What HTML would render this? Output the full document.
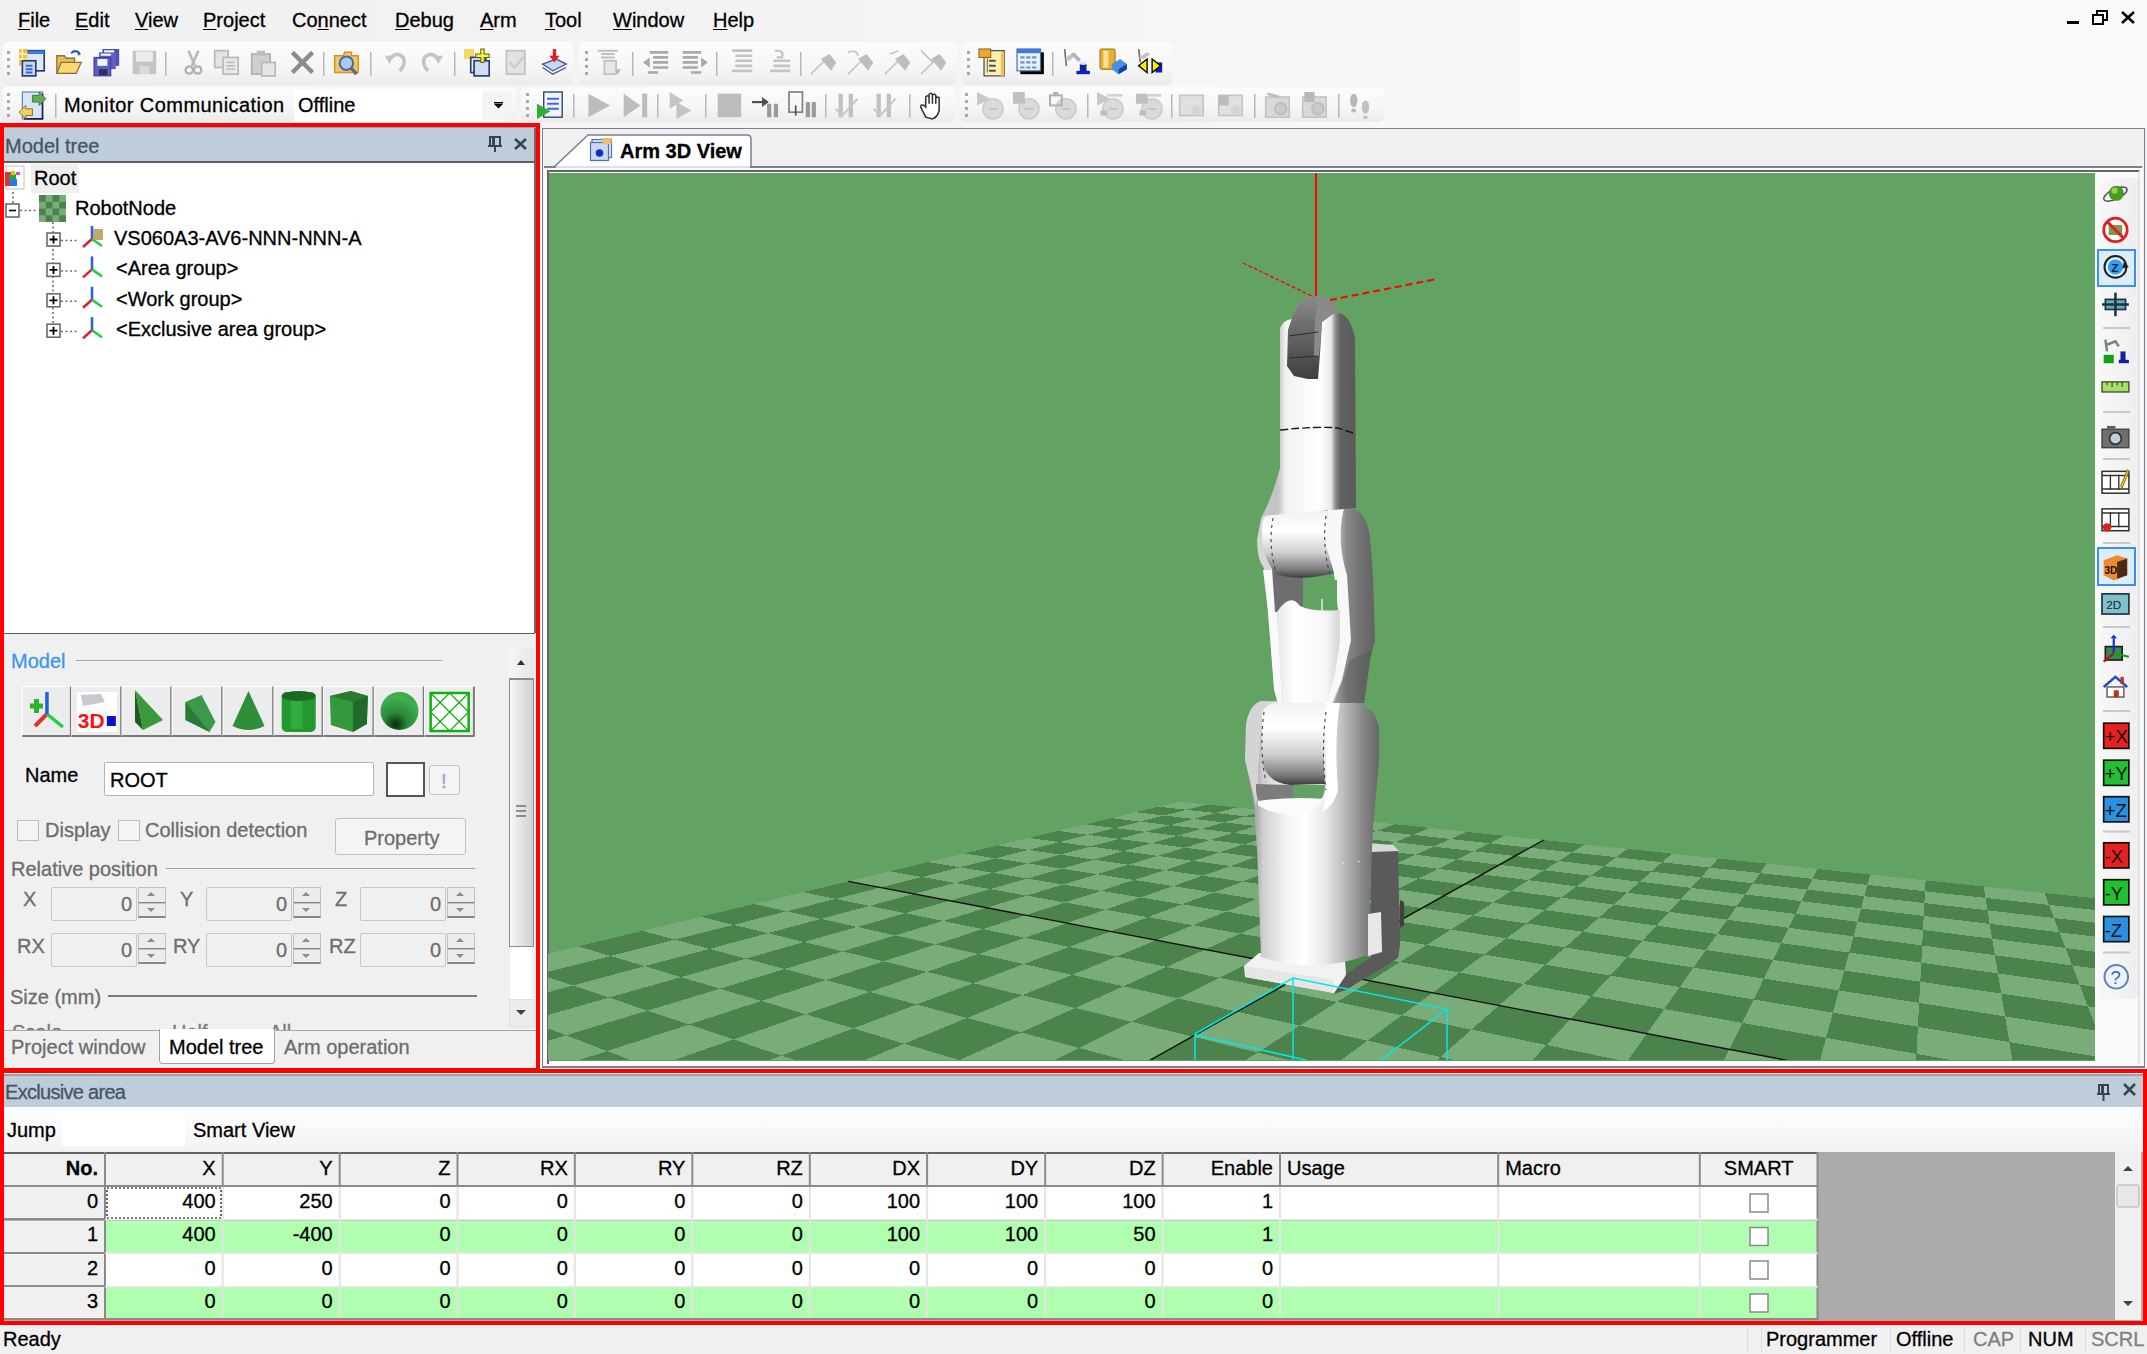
<!DOCTYPE html><html><head><meta charset="utf-8"><style>
html,body{margin:0;padding:0;}
body{width:2147px;height:1354px;overflow:hidden;position:relative;background:#f0f0f0;font-family:"Liberation Sans",sans-serif;}
.t{position:absolute;white-space:nowrap;line-height:1;-webkit-text-stroke:0.3px currentColor;}
div{box-sizing:border-box;}
svg{position:absolute;overflow:visible;}
u{text-decoration-thickness:1px;text-underline-offset:2px}
</style></head><body>
<div style="position:absolute;left:0px;top:0px;width:2147px;height:41px;background:linear-gradient(90deg,#f0f0f0,#f3f3f3 40%,#f8f8f8 65%,#fafafa)"></div>
<div class="t" style="left:18px;top:9.9px;font-size:20px;color:#000;font-weight:normal;"><u>F</u>ile</div>
<div class="t" style="left:75px;top:9.9px;font-size:20px;color:#000;font-weight:normal;"><u>E</u>dit</div>
<div class="t" style="left:135px;top:9.9px;font-size:20px;color:#000;font-weight:normal;"><u>V</u>iew</div>
<div class="t" style="left:203px;top:9.9px;font-size:20px;color:#000;font-weight:normal;"><u>P</u>roject</div>
<div class="t" style="left:292px;top:9.9px;font-size:20px;color:#000;font-weight:normal;">Co<u>n</u>nect</div>
<div class="t" style="left:395px;top:9.9px;font-size:20px;color:#000;font-weight:normal;"><u>D</u>ebug</div>
<div class="t" style="left:480px;top:9.9px;font-size:20px;color:#000;font-weight:normal;"><u>A</u>rm</div>
<div class="t" style="left:545px;top:9.9px;font-size:20px;color:#000;font-weight:normal;"><u>T</u>ool</div>
<div class="t" style="left:613px;top:9.9px;font-size:20px;color:#000;font-weight:normal;"><u>W</u>indow</div>
<div class="t" style="left:713px;top:9.9px;font-size:20px;color:#000;font-weight:normal;"><u>H</u>elp</div>
<svg style="left:0;top:0" width="2147" height="41"><rect x="2067" y="21" width="12" height="3" fill="#000"/><rect x="2097" y="11" width="10" height="9" fill="none" stroke="#000" stroke-width="2"/><rect x="2093" y="15" width="10" height="9" fill="#fafafa" stroke="#000" stroke-width="2"/><path d="M2122 12 L2134 23 M2134 12 L2122 23" stroke="#000" stroke-width="2.5"/></svg>
<div style="position:absolute;left:0px;top:41px;width:2147px;height:87px;background:linear-gradient(90deg,#f1f1f1,#f4f4f4 40%,#f8f8f8 65%,#fafafa)"></div>
<div style="position:absolute;left:3px;top:42px;width:570px;height:43px;background:linear-gradient(#fcfcfc,#f6f6f6 60%,#ebebeb);border-radius:5px"></div>
<div style="position:absolute;left:579px;top:42px;width:378px;height:43px;background:linear-gradient(#fcfcfc,#f6f6f6 60%,#ebebeb);border-radius:5px"></div>
<div style="position:absolute;left:962px;top:42px;width:210px;height:43px;background:linear-gradient(#fcfcfc,#f6f6f6 60%,#ebebeb);border-radius:5px"></div>
<div style="position:absolute;left:3px;top:87px;width:513px;height:35px;background:linear-gradient(#fcfcfc,#f6f6f6 60%,#ebebeb);border-radius:5px"></div>
<div style="position:absolute;left:521px;top:87px;width:434px;height:35px;background:linear-gradient(#fcfcfc,#f6f6f6 60%,#ebebeb);border-radius:5px"></div>
<div style="position:absolute;left:960px;top:87px;width:424px;height:35px;background:linear-gradient(#fcfcfc,#f6f6f6 60%,#ebebeb);border-radius:5px"></div>
<svg style="left:0;top:0" width="2147" height="130"><rect x="7" y="51" width="3" height="3" fill="#a8a8a8"/><rect x="7" y="58" width="3" height="3" fill="#a8a8a8"/><rect x="7" y="65" width="3" height="3" fill="#a8a8a8"/><rect x="7" y="72" width="3" height="3" fill="#a8a8a8"/><rect x="585" y="51" width="3" height="3" fill="#a8a8a8"/><rect x="585" y="58" width="3" height="3" fill="#a8a8a8"/><rect x="585" y="65" width="3" height="3" fill="#a8a8a8"/><rect x="585" y="72" width="3" height="3" fill="#a8a8a8"/><rect x="967" y="51" width="3" height="3" fill="#a8a8a8"/><rect x="967" y="58" width="3" height="3" fill="#a8a8a8"/><rect x="967" y="65" width="3" height="3" fill="#a8a8a8"/><rect x="967" y="72" width="3" height="3" fill="#a8a8a8"/><rect x="7" y="93" width="3" height="3" fill="#a8a8a8"/><rect x="7" y="100" width="3" height="3" fill="#a8a8a8"/><rect x="7" y="107" width="3" height="3" fill="#a8a8a8"/><rect x="7" y="114" width="3" height="3" fill="#a8a8a8"/><rect x="526" y="93" width="3" height="3" fill="#a8a8a8"/><rect x="526" y="100" width="3" height="3" fill="#a8a8a8"/><rect x="526" y="107" width="3" height="3" fill="#a8a8a8"/><rect x="526" y="114" width="3" height="3" fill="#a8a8a8"/><rect x="965" y="93" width="3" height="3" fill="#a8a8a8"/><rect x="965" y="100" width="3" height="3" fill="#a8a8a8"/><rect x="965" y="107" width="3" height="3" fill="#a8a8a8"/><rect x="965" y="114" width="3" height="3" fill="#a8a8a8"/><g transform="translate(19,49) scale(1.68)"><rect x="4" y="1" width="11" height="12" fill="#dfe8f7" stroke="#2a3f6a" stroke-width="1"/><rect x="4" y="1" width="11" height="2" fill="#3d7ae0"/><rect x="0" y="0" width="5" height="10" fill="#f2c23a"/><path d="M0 3h5M0 6h5M2 0v10" stroke="#fff6c0" stroke-width="0.8"/><rect x="2" y="7" width="8" height="9" fill="#c8d8f0" stroke="#2a3f6a" stroke-width="1"/><path d="M4 10h4M4 12h4M4 14h4" stroke="#3a6ad0" stroke-width="1.2"/></g><g transform="translate(56,49) scale(1.68)"><path d="M0.5 4 L5 4 L6 5.5 L11 5.5 L11 14.5 L0.5 14.5 Z" fill="#e8c050" stroke="#8a7040" stroke-width="0.8"/><path d="M3 8 L15 8 L12 14.5 L0.5 14.5 Z" fill="#f8d870" stroke="#8a7040" stroke-width="0.8"/><path d="M9 2.5 Q11.5 0 14 2.5" stroke="#3a5a9a" stroke-width="1.2" fill="none"/><path d="M13 1.5 L15 3 L13 4 Z" fill="#3a5a9a"/></g><g transform="translate(94,49) scale(1.68)"><rect x="5" y="0" width="10" height="10" fill="#5050b0"/><rect x="3" y="2" width="10" height="10" fill="#6060c0"/><rect x="0" y="5" width="10" height="11" fill="#5a5ac8" stroke="#3a3a90" stroke-width="0.6"/><rect x="2" y="6" width="6" height="4" fill="#f4f4ff"/><rect x="3" y="12" width="5" height="3.5" fill="#303050"/><rect x="6" y="0.8" width="6" height="1.2" fill="#fff"/><rect x="4" y="2.8" width="6" height="1.2" fill="#fff"/></g><g transform="translate(131,49) scale(1.68)"><rect x="1" y="1" width="14" height="14" fill="#c4c4c4"/><rect x="3" y="1.5" width="10" height="6" fill="#ececec"/><rect x="5" y="10" width="6" height="5" fill="#dadada"/></g><g transform="translate(180,49) scale(1.68)"><path d="M5 1 L9 10 M11 1 L7 10" stroke="#b8b8b8" stroke-width="1.5"/><circle cx="5.5" cy="12.5" r="2.2" fill="none" stroke="#b0b0b0" stroke-width="1.4"/><circle cx="10.5" cy="12.5" r="2.2" fill="none" stroke="#b0b0b0" stroke-width="1.4"/></g><g transform="translate(213,49) scale(1.68)"><rect x="1" y="1" width="8" height="10" fill="#e4e4e4" stroke="#b8b8b8"/><rect x="6" y="5" width="9" height="10" fill="#e8e8e8" stroke="#b8b8b8"/><path d="M8 8h5M8 10h5M8 12h5" stroke="#c0c0c0"/></g><g transform="translate(250,49) scale(1.68)"><rect x="1" y="3" width="11" height="12" fill="#cfcfcf" stroke="#b0b0b0"/><rect x="4" y="1" width="5" height="3" fill="#bdbdbd"/><rect x="7" y="8" width="8" height="8" fill="#e6e6e6" stroke="#b8b8b8"/></g><g transform="translate(289,49) scale(1.68)"><path d="M2 2 L14 14 M14 2 L2 14" stroke="#8c8c8c" stroke-width="2.6"/></g><g transform="translate(333,49) scale(1.68)"><path d="M1 4 L6 4 L7 2 L11 2 L11 4 L15 4 L15 14 L1 14 Z" fill="#f0c868" stroke="#d89020" stroke-width="0.9"/><circle cx="8" cy="8.5" r="4" fill="#a8c8f0" stroke="#4a6aa0" stroke-width="1.2"/><path d="M11 11.5 L14 15" stroke="#5a6a8a" stroke-width="2"/></g><g transform="translate(383,49) scale(1.68)"><path d="M4 6 Q8 1 12 5 Q14 9 10 13" stroke="#c4c4c4" stroke-width="2.2" fill="none"/><path d="M1 4 L6 4 L4 9 Z" fill="#c4c4c4"/></g><g transform="translate(418,49) scale(1.68)"><path d="M12 6 Q8 1 4 5 Q2 9 6 13" stroke="#c4c4c4" stroke-width="2.2" fill="none"/><path d="M15 4 L10 4 L12 9 Z" fill="#c4c4c4"/></g><g transform="translate(464,49) scale(1.68)"><rect x="0" y="0" width="6" height="6" fill="#f4d860"/><rect x="4" y="5" width="9" height="9" fill="#e8eef8" stroke="#2a3f6a"/><rect x="6" y="7" width="9" height="9" fill="#d0dcf0" stroke="#2a3f6a"/><path d="M10 0 L12 0 L12 3 L15 3 L15 5 L12 5 L12 8 L10 8 L10 5 L7 5 L7 3 L10 3 Z" fill="#f8f040" stroke="#606010" stroke-width="0.6"/></g><g transform="translate(503,49) scale(1.68)"><rect x="2" y="1" width="11" height="14" fill="#e2e2e2" stroke="#c0c0c0"/><path d="M4 8 L7 11 L12 5" stroke="#c8c8c8" stroke-width="1.3" fill="none"/></g><g transform="translate(541,49) scale(1.68)"><path d="M1 9 L9 6 L15 9 L7 13 Z" fill="#c8d8f0" stroke="#4a5a8a" stroke-width="0.8"/><path d="M1 11 L7 15 L15 11" stroke="#4a5a8a" stroke-width="0.8" fill="none"/><rect x="7" y="0" width="2" height="5" fill="#e02020"/><path d="M5 4 L11 4 L8 8 Z" fill="#e02020"/></g><g transform="translate(596,49) scale(1.68)"><path d="M1 1h12M3 3h8M3 5h8" stroke="#c0c0c0" stroke-width="1.2"/><rect x="5" y="7" width="7" height="8" fill="#e6e6e6" stroke="#c0c0c0"/><path d="M11 12 L15 12 L13 15 Z" fill="#b8b8b8"/></g><g transform="translate(643,49) scale(1.68)"><path d="M4 2h11M6 5h9M6 8h9M6 11h9M3 14h6" stroke="#a8a8a8" stroke-width="1.6"/><path d="M0 8 L4 5 L4 11 Z" fill="#a8a8a8"/></g><g transform="translate(681,49) scale(1.68)"><path d="M1 2h11M1 5h9M1 8h9M1 11h9M6 14h6" stroke="#a8a8a8" stroke-width="1.6"/><path d="M16 8 L12 5 L12 11 Z" fill="#a8a8a8"/></g><g transform="translate(727,49) scale(1.68)"><path d="M3 1h12M5 4h10M5 7h10M5 10h10M3 13h12" stroke="#c4c4c4" stroke-width="1.6"/></g><g transform="translate(765,49) scale(1.68)"><path d="M3 13h12M5 10h10M5 7h10" stroke="#c4c4c4" stroke-width="1.6"/><path d="M6 1 Q12 1 10 5 L7 5" stroke="#c4c4c4" stroke-width="1.4" fill="none"/></g><g transform="translate(811,49) scale(1.68)"><path d="M0 15 L8 7" stroke="#c4c4c4" stroke-width="1"/><path d="M6 6 L11 3 L15 8 L12 13 Z" fill="#bdbdbd"/></g><g transform="translate(848,49) scale(1.68)"><path d="M0 15 L8 7" stroke="#c4c4c4" stroke-width="1"/><path d="M6 6 L11 3 L15 8 L12 13 Z" fill="#bdbdbd"/><path d="M0 2 Q5 0 6 4" stroke="#c4c4c4" fill="none"/></g><g transform="translate(885,49) scale(1.68)"><path d="M0 15 L8 7" stroke="#c4c4c4" stroke-width="1"/><path d="M6 6 L11 3 L15 8 L12 13 Z" fill="#bdbdbd"/><path d="M3 3 L8 1" stroke="#c4c4c4"/></g><g transform="translate(921,49) scale(1.68)"><path d="M0 15 L8 7" stroke="#c4c4c4" stroke-width="1"/><path d="M6 6 L11 3 L15 8 L12 13 Z" fill="#bdbdbd"/><path d="M0 1 L7 8" stroke="#c4c4c4"/></g><g transform="translate(979,49) scale(1.68)"><rect x="3" y="1" width="12" height="15" fill="#fff0b0" stroke="#404040" stroke-width="0.7"/><rect x="13" y="2" width="2" height="14" fill="#f0c060"/><rect x="0" y="0" width="7" height="5" fill="#f0a830" stroke="#806020" stroke-width="0.6"/><path d="M6 7h4M6 10h4M6 13h4" stroke="#505050" stroke-width="1.2"/><path d="M5 5v9" stroke="#808080" stroke-width="0.8"/></g><g transform="translate(1017,49) scale(1.68)"><rect x="2" y="2" width="14" height="13" fill="#000"/><rect x="0" y="0" width="14" height="13" fill="#e8f0fc" stroke="#5070a8" stroke-width="0.7"/><rect x="0" y="0" width="14" height="2.5" fill="#3c78e0"/><path d="M2 5h10M2 8h10M2 11h10" stroke="#7090c8" stroke-width="1.3" stroke-dasharray="2.5 1"/></g><g transform="translate(1063,49) scale(1.68)"><path d="M1 0 L2 10" stroke="#707070" stroke-width="1"/><path d="M1 6 L6 2 L8 3 L4 7 Z" fill="#c0c0c8"/><path d="M6 3 L10 7" stroke="#b0b0c0" stroke-width="2"/><rect x="10" y="9" width="4" height="5" fill="#1020a0"/><rect x="8" y="13" width="8" height="2" fill="#1020c0"/><ellipse cx="12" cy="8.5" rx="2" ry="1" fill="#e0e0f0"/></g><g transform="translate(1100,49) scale(1.68)"><rect x="0" y="0" width="9" height="12" rx="1" fill="#e8b030" stroke="#a07020" stroke-width="0.6"/><rect x="2" y="1" width="3" height="10" fill="#f8e098"/><path d="M7 9 L12 6 L16 9 L16 12 L11 15 L7 12 Z" fill="#4a90e0"/><path d="M11 15 L16 12 L16 9 L11 12 Z" fill="#1040b0"/></g><g transform="translate(1137,49) scale(1.68)"><path d="M1 0 L2 8" stroke="#707070"/><path d="M1 5 L6 2 L8 3 L4 6 Z" fill="#c0c0c8"/><rect x="11" y="8" width="4" height="6" fill="#1020a0"/><path d="M6 6 L1 10 L6 14 Z" fill="#f8f000" stroke="#000" stroke-width="0.8"/><path d="M9 6 L14 10 L9 14 Z" fill="#f8f000" stroke="#000" stroke-width="0.8"/></g><rect x="165" y="52" width="1.5" height="24" fill="#b8b8b8"/><rect x="323" y="52" width="1.5" height="24" fill="#b8b8b8"/><rect x="370" y="52" width="1.5" height="24" fill="#b8b8b8"/><rect x="454" y="52" width="1.5" height="24" fill="#b8b8b8"/><rect x="632" y="52" width="1.5" height="24" fill="#b8b8b8"/><rect x="716" y="52" width="1.5" height="24" fill="#b8b8b8"/><rect x="800" y="52" width="1.5" height="24" fill="#b8b8b8"/><rect x="1052" y="52" width="1.5" height="24" fill="#b8b8b8"/><g transform="translate(19,92) scale(1.68)"><rect x="2" y="0" width="12" height="16" fill="#d8e4f8" stroke="#6080c0" stroke-width="0.7"/><path d="M14 1 L14 16 L3 16" stroke="#202050" stroke-width="1" fill="none"/><path d="M8 2 L12 2 L12 0 L16 4 L12 8 L12 6 L8 6 Z" fill="#60b050" stroke="#307030" stroke-width="0.5"/><path d="M8 10 L4 10 L4 8 L0 12 L4 16 L4 14 L8 14 Z" fill="#f0d060" stroke="#806020" stroke-width="0.5"/></g><g transform="translate(537,92) scale(1.68)"><rect x="4" y="0" width="11" height="15" fill="#f0f4fc" stroke="#2a3f6a" stroke-width="0.8"/><path d="M6 4h7M6 7h7M6 10h7" stroke="#3a6ad0" stroke-width="1.2"/><path d="M0 7 L8 11.5 L0 16 Z" fill="#30b030"/></g><g transform="translate(585,92) scale(1.68)"><path d="M2 1 L15 8 L2 15 Z" fill="#bcbcbc"/></g><g transform="translate(622,92) scale(1.68)"><path d="M1 1 L11 8 L1 15 Z" fill="#bcbcbc"/><rect x="12" y="1" width="3" height="14" fill="#bcbcbc"/></g><g transform="translate(668,92) scale(1.68)"><path d="M1 0 L9 5 L1 10 Z" fill="#c4c4c4"/><path d="M5 6 L14 11 L5 16 Z" fill="#c4c4c4"/></g><g transform="translate(716,92) scale(1.68)"><rect x="1" y="1" width="14" height="14" fill="#bcbcbc"/></g><g transform="translate(752,92) scale(1.68)"><path d="M0 6h9" stroke="#505050" stroke-width="1.3"/><path d="M6 3 L10 6 L6 9 Z" fill="#505050"/><rect x="9" y="7" width="2.5" height="8" fill="#9a9a9a"/><rect x="13" y="7" width="2.5" height="8" fill="#9a9a9a"/></g><g transform="translate(789,92) scale(1.68)"><rect x="0" y="0" width="8" height="12" fill="none" stroke="#808080" stroke-width="1"/><path d="M4 8v6" stroke="#505050"/><rect x="10" y="6" width="2.5" height="9" fill="#9a9a9a"/><rect x="13.5" y="6" width="2.5" height="9" fill="#9a9a9a"/></g><g transform="translate(834,92) scale(1.68)"><path d="M4 1v14M10 1v14" stroke="#c0c0c0" stroke-width="2.5"/><path d="M1 10 L5 14 L14 4" stroke="#c8c8c8" stroke-width="1.2" fill="none"/></g><g transform="translate(872,92) scale(1.68)"><path d="M4 1v14M10 1v14" stroke="#c0c0c0" stroke-width="2.5"/><path d="M1 10 L5 14 L14 4" stroke="#c8c8c8" stroke-width="1.2" fill="none"/></g><g transform="translate(919,92) scale(1.68)"><path d="M4 15 L1 9 Q1 7 3 8 L4 9 L4 3 Q5 1.5 6 3 L6 7 L6 1.5 Q7 0 8 1.5 L8 7 L8 2 Q9 0.8 10 2 L10 7 L10 3.5 Q11 2.5 12 3.5 L12 11 Q11 15 8 16 Z" fill="#fff" stroke="#303030" stroke-width="0.9"/></g><g transform="translate(977,92) scale(1.68)"><circle cx="9.5" cy="10" r="6" fill="#dadada" stroke="#cdcdcd"/><path d="M7 10h5" stroke="#c0c0c0"/><path d="M0 0 L8 4 L0 8 Z" fill="#c8c8c8"/></g><g transform="translate(1013,92) scale(1.68)"><circle cx="9.5" cy="10" r="6" fill="#dadada" stroke="#cdcdcd"/><path d="M7 10h5" stroke="#c0c0c0"/><rect x="0" y="0" width="7" height="7" fill="#c0c0c0"/></g><g transform="translate(1050,92) scale(1.68)"><circle cx="9.5" cy="10" r="6" fill="#dadada" stroke="#cdcdcd"/><path d="M7 10h5" stroke="#c0c0c0"/><rect x="0" y="2" width="7" height="6" fill="none" stroke="#b0b0b0" stroke-width="1.2"/><rect x="2" y="0" width="3" height="2" fill="#b0b0b0"/></g><g transform="translate(1097,92) scale(1.68)"><circle cx="9.5" cy="10" r="6" fill="#dadada" stroke="#cdcdcd"/><path d="M7 10h5" stroke="#c0c0c0"/><path d="M0 0 L8 4 L0 8 Z" fill="#c8c8c8"/><path d="M6 2h9" stroke="#d0d0d0" stroke-width="1.5"/><rect x="2" y="11" width="4" height="3" fill="#bdbdbd"/></g><g transform="translate(1136,92) scale(1.68)"><circle cx="9.5" cy="10" r="6" fill="#dadada" stroke="#cdcdcd"/><path d="M7 10h5" stroke="#c0c0c0"/><rect x="0" y="1" width="7" height="6" fill="#c0c0c0"/><path d="M6 2h9" stroke="#d0d0d0" stroke-width="1.5"/><rect x="2" y="11" width="4" height="3" fill="#bdbdbd"/></g><g transform="translate(1178,92) scale(1.68)"><rect x="1" y="2" width="14" height="12" fill="#e0e0e0" stroke="#c4c4c4"/><circle cx="11" cy="11" r="3" fill="#d4d4d4"/></g><g transform="translate(1217,92) scale(1.68)"><rect x="1" y="2" width="14" height="12" fill="#e0e0e0" stroke="#c4c4c4"/><circle cx="11" cy="11" r="3" fill="#d4d4d4"/><rect x="1" y="2" width="6" height="6" fill="#bcbcbc"/></g><g transform="translate(1264,92) scale(1.68)"><rect x="1" y="3" width="14" height="12" fill="#d8d8d8" stroke="#c4c4c4"/><circle cx="10" cy="10" r="3.5" fill="#cacaca" stroke="#bbb"/><path d="M2 1 L9 3" stroke="#bdbdbd" stroke-width="1.5"/></g><g transform="translate(1301,92) scale(1.68)"><rect x="1" y="3" width="14" height="12" fill="#d8d8d8" stroke="#c4c4c4"/><circle cx="10" cy="10" r="3.5" fill="#cacaca" stroke="#bbb"/><rect x="2" y="0" width="6" height="6" fill="#b8b8b8"/></g><g transform="translate(1347,92) scale(1.68)"><ellipse cx="4" cy="5" rx="2.2" ry="4" fill="#b8b8b8"/><ellipse cx="11" cy="9" rx="2.2" ry="4" fill="#c0c0c0"/><ellipse cx="4" cy="11" rx="1.5" ry="1.2" fill="#b8b8b8"/><ellipse cx="11" cy="15" rx="1.5" ry="1" fill="#c0c0c0"/></g><rect x="55" y="94" width="1.5" height="24" fill="#b8b8b8"/><rect x="573" y="94" width="1.5" height="24" fill="#b8b8b8"/><rect x="657" y="94" width="1.5" height="24" fill="#b8b8b8"/><rect x="705" y="94" width="1.5" height="24" fill="#b8b8b8"/><rect x="825" y="94" width="1.5" height="24" fill="#b8b8b8"/><rect x="909" y="94" width="1.5" height="24" fill="#b8b8b8"/><rect x="1087" y="94" width="1.5" height="24" fill="#b8b8b8"/><rect x="1171" y="94" width="1.5" height="24" fill="#b8b8b8"/><rect x="1254" y="94" width="1.5" height="24" fill="#b8b8b8"/><rect x="1338" y="94" width="1.5" height="24" fill="#b8b8b8"/></svg>
<div class="t" style="left:64px;top:94.9px;font-size:20px;color:#000;font-weight:normal;letter-spacing:0.45px">Monitor Communication</div>
<div style="position:absolute;left:294px;top:90px;width:217px;height:31px;background:#fff"></div>
<div style="position:absolute;left:482px;top:91px;width:29px;height:29px;background:#f4f4f4"></div>
<svg style="left:0;top:0" width="600" height="130"><path d="M494 104 L503 104 L498.5 108.5 Z" fill="#000"/><rect x="494" y="102" width="9" height="1.5" fill="#000"/></svg>
<div class="t" style="left:298px;top:94.9px;font-size:20px;color:#000;font-weight:normal;">Offline</div>
<div style="position:absolute;left:0px;top:123px;width:540px;height:949px;background:#ff0000"></div>
<div style="position:absolute;left:4px;top:127px;width:532px;height:941px;background:#f0f0f0"></div>
<div style="position:absolute;left:4px;top:127px;width:532px;height:1px;background:#a0a0a0"></div>
<div style="position:absolute;left:4px;top:128px;width:531px;height:33px;background:#bfcddb"></div>
<div class="t" style="left:5px;top:135.9px;font-size:20px;color:#465566;font-weight:normal;">Model tree</div>
<svg style="left:0;top:0" width="560" height="170"><path d="M490 137 h10 v9 h-10 z M488 146 h14 M495 146 v6" stroke="#3a4450" stroke-width="2" fill="none"/><rect x="492" y="138" width="3" height="8" fill="#3a4450"/><path d="M515 139 L526 149 M526 139 L515 149" stroke="#3a4450" stroke-width="2.6"/></svg>
<div style="position:absolute;left:4px;top:161px;width:531px;height:2px;background:#5f5f5f"></div>
<div style="position:absolute;left:4px;top:163px;width:530px;height:470px;background:#fff"></div>
<div style="position:absolute;left:534px;top:128px;width:2px;height:505px;background:#6a6a6a"></div>
<div style="position:absolute;left:4px;top:633px;width:531px;height:1px;background:#5f5f5f"></div>
<div style="position:absolute;left:31px;top:164px;width:48px;height:29px;background:#efefef"></div>
<div class="t" style="left:34px;top:167.9px;font-size:20px;color:#000;font-weight:normal;">Root</div>
<div class="t" style="left:75px;top:197.9px;font-size:20px;color:#000;font-weight:normal;">RobotNode</div>
<div class="t" style="left:114px;top:227.9px;font-size:20px;color:#000;font-weight:normal;">VS060A3-AV6-NNN-NNN-A</div>
<div class="t" style="left:116px;top:258.3px;font-size:20px;color:#000;font-weight:normal;">&lt;Area group&gt;</div>
<div class="t" style="left:116px;top:288.7px;font-size:20px;color:#000;font-weight:normal;">&lt;Work group&gt;</div>
<div class="t" style="left:116px;top:319.1px;font-size:20px;color:#000;font-weight:normal;">&lt;Exclusive area group&gt;</div>
<svg style="left:0;top:0" width="560" height="640"><rect x="6" y="166" width="18" height="23" fill="#fff" stroke="#b0b0b0" stroke-width="0.8"/><rect x="5" y="172" width="8" height="14" fill="#e03040"/><rect x="9" y="174" width="7" height="7" fill="#30a040"/><rect x="10" y="179" width="7" height="7" fill="#2080e0"/><rect x="11" y="171" width="4" height="4" fill="#f0c000"/><rect x="16" y="172" width="4" height="3" fill="#e040e0"/><path d="M13 192 V203 M20 210.5 H38 M53 222 V323 M61 240.5 H79 M61 271 H79 M61 301.3 H79 M61 331.5 H79" stroke="#707070" stroke-width="1.6" stroke-dasharray="2 2.5"/><rect x="6" y="204" width="13" height="13" fill="#fff" stroke="#6a6a6a" stroke-width="1.6"/><path d="M9 210.5 H16" stroke="#000" stroke-width="1.6"/><rect x="39" y="195" width="27" height="27" fill="#7aac7a"/><rect x="39.00" y="195.00" width="6.75" height="6.75" fill="#4c824c"/><rect x="39.00" y="208.50" width="6.75" height="6.75" fill="#4c824c"/><rect x="45.75" y="201.75" width="6.75" height="6.75" fill="#4c824c"/><rect x="45.75" y="215.25" width="6.75" height="6.75" fill="#4c824c"/><rect x="52.50" y="195.00" width="6.75" height="6.75" fill="#4c824c"/><rect x="52.50" y="208.50" width="6.75" height="6.75" fill="#4c824c"/><rect x="59.25" y="201.75" width="6.75" height="6.75" fill="#4c824c"/><rect x="59.25" y="215.25" width="6.75" height="6.75" fill="#4c824c"/><rect x="47" y="233.0" width="13" height="13" fill="#fff" stroke="#6a6a6a" stroke-width="1.6"/><path d="M49.5 239.5 H57.5 M53.5 235.5 V243.5" stroke="#000" stroke-width="1.8"/><g transform="translate(81,225.0)"><path d="M11 14 V1" stroke="#3060e0" stroke-width="2.6"/><path d="M11 14 L2 22" stroke="#e02030" stroke-width="2.6"/><path d="M11 14 L21 21" stroke="#20d040" stroke-width="2.6"/></g><rect x="47" y="263.4" width="13" height="13" fill="#fff" stroke="#6a6a6a" stroke-width="1.6"/><path d="M49.5 269.9 H57.5 M53.5 265.9 V273.9" stroke="#000" stroke-width="1.8"/><g transform="translate(81,255.4)"><path d="M11 14 V1" stroke="#3060e0" stroke-width="2.6"/><path d="M11 14 L2 22" stroke="#e02030" stroke-width="2.6"/><path d="M11 14 L21 21" stroke="#20d040" stroke-width="2.6"/></g><rect x="47" y="293.8" width="13" height="13" fill="#fff" stroke="#6a6a6a" stroke-width="1.6"/><path d="M49.5 300.3 H57.5 M53.5 296.3 V304.3" stroke="#000" stroke-width="1.8"/><g transform="translate(81,285.8)"><path d="M11 14 V1" stroke="#3060e0" stroke-width="2.6"/><path d="M11 14 L2 22" stroke="#e02030" stroke-width="2.6"/><path d="M11 14 L21 21" stroke="#20d040" stroke-width="2.6"/></g><rect x="47" y="324.2" width="13" height="13" fill="#fff" stroke="#6a6a6a" stroke-width="1.6"/><path d="M49.5 330.7 H57.5 M53.5 326.7 V334.7" stroke="#000" stroke-width="1.8"/><g transform="translate(81,316.2)"><path d="M11 14 V1" stroke="#3060e0" stroke-width="2.6"/><path d="M11 14 L2 22" stroke="#e02030" stroke-width="2.6"/><path d="M11 14 L21 21" stroke="#20d040" stroke-width="2.6"/></g><rect x="93" y="229" width="10" height="11" fill="#b8a060" opacity="0.9"/></svg>
<div class="t" style="left:11px;top:650.9px;font-size:20px;color:#3c96f0;font-weight:normal;">Model</div>
<div style="position:absolute;left:76px;top:660px;width:366px;height:1px;background:#a8a8a8"></div>
<div style="position:absolute;left:508px;top:645px;width:26px;height:385px;background:#f0f0f0"></div>
<div style="position:absolute;left:509px;top:648px;width:25px;height:30px;background:linear-gradient(90deg,#f6f6f6,#e6e6e6)"></div>
<div style="position:absolute;left:509px;top:678px;width:25px;height:269px;background:linear-gradient(90deg,#f6f6f6,#e4e4e4 50%,#d0d0d0);border:1.6px solid #8c8c8c;border-top-width:2px"></div>
<div style="position:absolute;left:510px;top:947px;width:22px;height:52px;background:#fff"></div>
<div style="position:absolute;left:509px;top:999px;width:26px;height:28px;background:#ececec;border:1px solid #e0e0e0"></div>
<svg style="left:0;top:0" width="560" height="1100"><path d="M517 665 L525 665 L521 660 Z" fill="#303030"/><path d="M516 1010 L526 1010 L521 1015 Z" fill="#404040"/><path d="M516 806h10M516 811h10M516 816h10" stroke="#707070" stroke-width="1.3"/></svg>
<svg style="left:0;top:0" width="560" height="760"><rect x="22.2" y="686.5" width="49.5" height="49.5" fill="#ececec" stroke="#fff" stroke-width="1"/><path d="M22.2 736 H71.7 M70.9 686.5 V736" stroke="#787878" stroke-width="2"/><rect x="71.7" y="686.5" width="50.3" height="49.5" fill="#ececec" stroke="#fff" stroke-width="1"/><path d="M71.7 736 H122.0 M121.2 686.5 V736" stroke="#787878" stroke-width="2"/><rect x="122.0" y="686.5" width="50.0" height="49.5" fill="#ececec" stroke="#fff" stroke-width="1"/><path d="M122.0 736 H172.0 M171.2 686.5 V736" stroke="#787878" stroke-width="2"/><rect x="172.0" y="686.5" width="51.0" height="49.5" fill="#ececec" stroke="#fff" stroke-width="1"/><path d="M172.0 736 H223.0 M222.2 686.5 V736" stroke="#787878" stroke-width="2"/><rect x="223.0" y="686.5" width="51.0" height="49.5" fill="#ececec" stroke="#fff" stroke-width="1"/><path d="M223.0 736 H274.0 M273.2 686.5 V736" stroke="#787878" stroke-width="2"/><rect x="274.0" y="686.5" width="49.4" height="49.5" fill="#ececec" stroke="#fff" stroke-width="1"/><path d="M274.0 736 H323.4 M322.6 686.5 V736" stroke="#787878" stroke-width="2"/><rect x="323.4" y="686.5" width="50.9" height="49.5" fill="#ececec" stroke="#fff" stroke-width="1"/><path d="M323.4 736 H374.3 M373.5 686.5 V736" stroke="#787878" stroke-width="2"/><rect x="374.3" y="686.5" width="50.3" height="49.5" fill="#ececec" stroke="#fff" stroke-width="1"/><path d="M374.3 736 H424.6 M423.8 686.5 V736" stroke="#787878" stroke-width="2"/><rect x="424.6" y="686.5" width="50.1" height="49.5" fill="#ececec" stroke="#fff" stroke-width="1"/><path d="M424.6 736 H474.7 M473.9 686.5 V736" stroke="#787878" stroke-width="2"/><g transform="translate(24.950000000000003,690)"><path d="M14 36 L22 24 L40 38" stroke="#e03030" stroke-width="0" fill="none"/><path d="M22 24 L10 36" stroke="#e03030" stroke-width="4"/><path d="M22 24 L38 37" stroke="#20d040" stroke-width="3.5"/><path d="M22 24 V2" stroke="#2060e0" stroke-width="3.5"/><path d="M5 16 h13 M11.5 9 v14" stroke="#30b030" stroke-width="5"/></g><g transform="translate(74.85,690)"><rect x="2" y="2" width="40" height="40" fill="#fff"/><path d="M6 5 L8 16 L30 12 L26 4 Z" fill="#c8c8d0"/><text x="3" y="38" font-family="Liberation Sans" font-weight="bold" font-size="21" fill="#ff1010">3D</text><rect x="32" y="26" width="9" height="10" fill="#1010d0"/></g><g transform="translate(125.0,690)"><path d="M10 0 L38 30 L18 40 Z" fill="#3a9a3a"/><path d="M10 0 L18 40 L10 32 Z" fill="#1f5a24"/></g><g transform="translate(175.5,690)"><path d="M10 12 L26 5 L40 32 L34 42 L10 30 Z" fill="#3a9a4a"/><path d="M10 12 L34 42 L10 30 Z" fill="#2a7a3a"/></g><g transform="translate(226.5,690)"><path d="M22 1 L38 36 Q22 44 6 36 Z" fill="#2e8e3a"/></g><g transform="translate(276.7,690)"><rect x="5" y="2" width="34" height="40" rx="5" fill="#22982f"/><ellipse cx="22" cy="6" rx="17" ry="5" fill="#1a6a22"/><rect x="14" y="11" width="12" height="28" fill="#40c050" opacity="0.5"/></g><g transform="translate(326.85,690)"><path d="M3 6 L24 1 L41 6 L40 34 L26 42 L4 35 Z" fill="#34983e"/><path d="M26 12 L41 6 L40 34 L26 42 Z" fill="#1f6a28"/><path d="M3 6 L24 1 L41 6 L26 12 Z" fill="#2a7a30"/></g><g transform="translate(377.45000000000005,690)"><defs><radialGradient id="gsph" cx="0.4" cy="0.85" r="0.9"><stop offset="0" stop-color="#0a2a0a"/><stop offset="0.35" stop-color="#2a8a3a"/><stop offset="0.8" stop-color="#40b050"/><stop offset="1" stop-color="#3aa048"/></radialGradient></defs><circle cx="22" cy="21" r="19" fill="url(#gsph)"/></g><g transform="translate(427.65,690)"><rect x="3" y="3" width="38" height="38" fill="#fff" stroke="#10b010" stroke-width="2.5"/><path d="M3 3 L41 41 M41 3 L3 41 M22 3 L3 22 L22 41 L41 22 Z" stroke="#10b010" stroke-width="1.2" fill="none"/></g></svg>
<div class="t" style="left:25px;top:764.9px;font-size:20px;color:#000;font-weight:normal;">Name</div>
<div style="position:absolute;left:104px;top:762px;width:270px;height:34px;background:#fff;border:1px solid #b4b4b4;border-radius:2px"></div>
<div class="t" style="left:110px;top:769.9px;font-size:20px;color:#000;font-weight:normal;">ROOT</div>
<div style="position:absolute;left:386px;top:762px;width:39px;height:35px;background:#fff;border:2px solid #555"></div>
<div style="position:absolute;left:429px;top:765px;width:31px;height:30px;background:#f4f4f4;border:1px solid #c4c4c4;border-radius:3px"></div>
<div class="t" style="left:441px;top:770.9px;font-size:20px;color:#a0a0d0;font-weight:normal;">!</div>
<div style="position:absolute;left:17px;top:820px;width:22px;height:21px;background:#f4f4f4;border:1.5px solid #bcbcbc"></div>
<div class="t" style="left:45px;top:819.9px;font-size:20px;color:#6d6d6d;font-weight:normal;">Display</div>
<div style="position:absolute;left:118px;top:820px;width:22px;height:21px;background:#f4f4f4;border:1.5px solid #bcbcbc"></div>
<div class="t" style="left:145px;top:819.9px;font-size:20px;color:#6d6d6d;font-weight:normal;">Collision detection</div>
<div style="position:absolute;left:335px;top:818px;width:131px;height:37px;background:#f4f4f4;border:1.5px solid #c0c0c0;border-radius:3px"></div>
<div class="t" style="left:364px;top:827.9px;font-size:20px;color:#6d6d6d;font-weight:normal;">Property</div>
<div class="t" style="left:11px;top:858.9px;font-size:20px;color:#6d6d6d;font-weight:normal;">Relative position</div>
<div style="position:absolute;left:166px;top:868px;width:309px;height:1px;background:#a0a0a0"></div>
<div class="t" style="left:23px;top:888.9px;font-size:20px;color:#6d6d6d;font-weight:normal;">X</div>
<div style="position:absolute;left:51px;top:887px;width:86px;height:34px;background:#f0f0f0;border:1.5px solid #c8c8c8;border-radius:2px"></div>
<div class="t" style="right:2015px;top:893.9px;font-size:20px;color:#6d6d6d;font-weight:normal">0</div>
<div style="position:absolute;left:138px;top:887px;width:28px;height:16px;background:#ececec;border:1.5px solid #c0c0c0;border-bottom-color:#888"></div>
<div style="position:absolute;left:138px;top:903px;width:28px;height:15px;background:#ececec;border:1.5px solid #c0c0c0;border-bottom:2px solid #888"></div>
<div class="t" style="left:180px;top:888.9px;font-size:20px;color:#6d6d6d;font-weight:normal;">Y</div>
<div style="position:absolute;left:206px;top:887px;width:86px;height:34px;background:#f0f0f0;border:1.5px solid #c8c8c8;border-radius:2px"></div>
<div class="t" style="right:1860px;top:893.9px;font-size:20px;color:#6d6d6d;font-weight:normal">0</div>
<div style="position:absolute;left:293px;top:887px;width:28px;height:16px;background:#ececec;border:1.5px solid #c0c0c0;border-bottom-color:#888"></div>
<div style="position:absolute;left:293px;top:903px;width:28px;height:15px;background:#ececec;border:1.5px solid #c0c0c0;border-bottom:2px solid #888"></div>
<div class="t" style="left:335px;top:888.9px;font-size:20px;color:#6d6d6d;font-weight:normal;">Z</div>
<div style="position:absolute;left:360px;top:887px;width:86px;height:34px;background:#f0f0f0;border:1.5px solid #c8c8c8;border-radius:2px"></div>
<div class="t" style="right:1706px;top:893.9px;font-size:20px;color:#6d6d6d;font-weight:normal">0</div>
<div style="position:absolute;left:447px;top:887px;width:28px;height:16px;background:#ececec;border:1.5px solid #c0c0c0;border-bottom-color:#888"></div>
<div style="position:absolute;left:447px;top:903px;width:28px;height:15px;background:#ececec;border:1.5px solid #c0c0c0;border-bottom:2px solid #888"></div>
<div class="t" style="left:17px;top:935.9px;font-size:20px;color:#6d6d6d;font-weight:normal;">RX</div>
<div style="position:absolute;left:51px;top:933px;width:86px;height:34px;background:#f0f0f0;border:1.5px solid #c8c8c8;border-radius:2px"></div>
<div class="t" style="right:2015px;top:939.9px;font-size:20px;color:#6d6d6d;font-weight:normal">0</div>
<div style="position:absolute;left:138px;top:933px;width:28px;height:16px;background:#ececec;border:1.5px solid #c0c0c0;border-bottom-color:#888"></div>
<div style="position:absolute;left:138px;top:949px;width:28px;height:15px;background:#ececec;border:1.5px solid #c0c0c0;border-bottom:2px solid #888"></div>
<div class="t" style="left:173px;top:935.9px;font-size:20px;color:#6d6d6d;font-weight:normal;">RY</div>
<div style="position:absolute;left:206px;top:933px;width:86px;height:34px;background:#f0f0f0;border:1.5px solid #c8c8c8;border-radius:2px"></div>
<div class="t" style="right:1860px;top:939.9px;font-size:20px;color:#6d6d6d;font-weight:normal">0</div>
<div style="position:absolute;left:293px;top:933px;width:28px;height:16px;background:#ececec;border:1.5px solid #c0c0c0;border-bottom-color:#888"></div>
<div style="position:absolute;left:293px;top:949px;width:28px;height:15px;background:#ececec;border:1.5px solid #c0c0c0;border-bottom:2px solid #888"></div>
<div class="t" style="left:329px;top:935.9px;font-size:20px;color:#6d6d6d;font-weight:normal;">RZ</div>
<div style="position:absolute;left:360px;top:933px;width:86px;height:34px;background:#f0f0f0;border:1.5px solid #c8c8c8;border-radius:2px"></div>
<div class="t" style="right:1706px;top:939.9px;font-size:20px;color:#6d6d6d;font-weight:normal">0</div>
<div style="position:absolute;left:447px;top:933px;width:28px;height:16px;background:#ececec;border:1.5px solid #c0c0c0;border-bottom-color:#888"></div>
<div style="position:absolute;left:447px;top:949px;width:28px;height:15px;background:#ececec;border:1.5px solid #c0c0c0;border-bottom:2px solid #888"></div>
<svg style="left:0;top:0" width="560" height="1000"><path d="M147 896 L155 896 L151 892 Z M147 908 L155 908 L151 912 Z" fill="#8a8a8a"/><path d="M147 942 L155 942 L151 938 Z M147 954 L155 954 L151 958 Z" fill="#8a8a8a"/><path d="M302 896 L310 896 L306 892 Z M302 908 L310 908 L306 912 Z" fill="#8a8a8a"/><path d="M302 942 L310 942 L306 938 Z M302 954 L310 954 L306 958 Z" fill="#8a8a8a"/><path d="M456 896 L464 896 L460 892 Z M456 908 L464 908 L460 912 Z" fill="#8a8a8a"/><path d="M456 942 L464 942 L460 938 Z M456 954 L464 954 L460 958 Z" fill="#8a8a8a"/></svg>
<div class="t" style="left:10px;top:986.9px;font-size:20px;color:#6d6d6d;font-weight:normal;">Size (mm)</div>
<div style="position:absolute;left:108px;top:995px;width:369px;height:2px;background:#7a7a7a"></div>
<div style="position:absolute;left:4px;top:1016px;width:500px;height:14px;overflow:hidden"><div class="t" style="left:8px;top:6px;font-size:20px;color:#7a7a7a">Scale</div><div class="t" style="left:168px;top:6px;font-size:20px;color:#7a7a7a">Half</div><div class="t" style="left:265px;top:6px;font-size:20px;color:#7a7a7a">All</div></div>
<div style="position:absolute;left:4px;top:1030px;width:532px;height:38px;background:#f0f0f0;border-top:1.5px solid #a8a8a8"></div>
<div style="position:absolute;left:159px;top:1029px;width:116px;height:35px;background:#fff;border:1.5px solid #a0a0a0;border-top:none;border-radius:0 0 4px 4px"></div>
<div class="t" style="left:11px;top:1036.9px;font-size:20px;color:#6d6d6d;font-weight:normal;">Project window</div>
<div class="t" style="left:169px;top:1036.9px;font-size:20px;color:#000;font-weight:normal;">Model tree</div>
<div class="t" style="left:284px;top:1036.9px;font-size:20px;color:#6d6d6d;font-weight:normal;">Arm operation</div>
<div style="position:absolute;left:540px;top:123px;width:607px;height:5px;background:#f5f5f5"></div>
<div style="position:absolute;left:540px;top:128px;width:5px;height:941px;background:#f8f8f8"></div>
<div style="position:absolute;left:542px;top:128px;width:1603px;height:940px;background:#f0f0f0;border:1.6px solid #7a8090;border-bottom-width:2px"></div>
<svg style="left:0;top:0" width="2147" height="200"><path d="M544 167 L554 167 L588 135 L747 135 Q751 135 751 139 L751 167 Z" fill="#fff" stroke="#7a8090" stroke-width="1.5"/><rect x="544" y="166" width="1598" height="2" fill="#7a8090"/><path d="M556 167 H750" stroke="#fff" stroke-width="1.5"/><g transform="translate(589,138) scale(1.5)"><rect x="2" y="1" width="13" height="12" fill="#dde6f6" stroke="#5070b0" stroke-width="0.8"/><rect x="1" y="3" width="12" height="12" fill="#c8d8f0" stroke="#5070b0" stroke-width="0.8"/><rect x="9" y="0" width="6" height="4" fill="#e8c070"/><circle cx="7" cy="10" r="2.5" fill="#1030c0"/></g></svg>
<div class="t" style="left:620px;top:140.9px;font-size:20px;color:#000;font-weight:bold;">Arm 3D View</div>
<div style="position:absolute;left:544px;top:168px;width:1599px;height:898px;background:#fafafa"></div>
<div style="position:absolute;left:547px;top:170px;width:1593px;height:894px;background:#fff;border-top:2.4px solid #646464;border-left:2.2px solid #646464;border-right:2px solid #e4e4e4"></div>
<div style="position:absolute;left:549px;top:172.6px;width:1546px;height:888.2px;background:#62a262"></div>
<svg style="left:0;top:0" width="2147" height="1354" viewBox="0 0 2147 1354"><defs><clipPath id="vclip"><rect x="548" y="173" width="1547" height="887"/></clipPath></defs><g clip-path="url(#vclip)">
<g shape-rendering="crispEdges"><path d="M2196.4 1046.3 L2097.2 1030.8 L2087.9 1006.4 L2180.7 1020.2Z M2166.8 997.0 L2079.6 984.8 L2072.2 965.4 L2154.4 976.4Z M2143.2 957.9 L2065.5 948.0 L2059.5 932.3 L2133.2 941.2Z M2124.1 926.1 L2054.0 918.0 L2049.0 904.9 L2115.8 912.3Z M2107.8 1058.4 L2009.3 1042.0 L2005.0 1016.4 L2097.2 1030.8Z M2087.9 1006.4 L2001.3 993.6 L1997.9 973.4 L2079.6 984.8Z M2072.2 965.4 L1994.9 955.2 L1992.2 938.8 L2065.5 948.0Z M2059.5 932.3 L1989.7 923.9 L1987.5 910.3 L2054.0 918.0Z M2049.0 904.9 L1985.5 897.9 L1983.6 886.5 L2044.4 893.0Z M2014.1 1071.2 L1916.5 1053.9 L1917.9 1026.8 L2009.3 1042.0Z M2005.0 1016.4 L1919.1 1002.9 L1920.3 981.7 L2001.3 993.6Z M1997.9 973.4 L1921.3 962.7 L1922.2 945.5 L1994.9 955.2Z M1992.2 938.8 L1923.0 930.0 L1923.7 915.9 L1989.7 923.9Z M1987.5 910.3 L1924.4 903.1 L1925.0 891.3 L1985.5 897.9Z M1914.8 1084.7 L1818.4 1066.4 L1826.1 1037.8 L1916.5 1053.9Z M1917.9 1026.8 L1832.9 1012.7 L1838.9 990.4 L1919.1 1002.9Z M1920.3 981.7 L1844.3 970.5 L1849.2 952.6 L1921.3 962.7Z M1922.2 945.5 L1853.5 936.4 L1857.5 921.8 L1923.0 930.0Z M1923.7 915.9 L1861.1 908.4 L1864.4 896.2 L1924.4 903.1Z M1925.0 891.3 L1867.4 884.9 L1870.2 874.5 L1925.6 880.4Z M1809.6 1099.1 L1714.7 1079.6 L1729.4 1049.4 L1818.4 1066.4Z M1826.1 1037.8 L1742.3 1022.9 L1753.7 999.5 L1832.9 1012.7Z M1838.9 990.4 L1763.9 978.6 L1773.0 959.9 L1844.3 970.5Z M1849.2 952.6 L1781.2 943.1 L1788.6 927.8 L1853.5 936.4Z M1857.5 921.8 L1795.4 913.9 L1801.6 901.2 L1861.1 908.4Z M1864.4 896.2 L1807.3 889.6 L1812.5 878.9 L1867.4 884.9Z M1729.4 1049.4 L1646.9 1033.7 L1664.3 1009.0 L1742.3 1022.9Z M1753.7 999.5 L1679.7 987.1 L1693.5 967.6 L1763.9 978.6Z M1773.0 959.9 L1705.9 950.0 L1717.1 934.1 L1781.2 943.1Z M1788.6 927.8 L1727.3 919.7 L1736.5 906.5 L1795.4 913.9Z M1801.6 901.2 L1745.1 894.4 L1752.9 883.3 L1807.3 889.6Z M1812.5 878.9 L1760.1 873.1 L1766.8 863.6 L1817.3 869.0Z M1627.2 1061.6 L1546.4 1045.0 L1570.4 1019.1 L1646.9 1033.7Z M1664.3 1009.0 L1591.5 996.1 L1610.4 975.6 L1679.7 987.1Z M1693.5 967.6 L1627.3 957.2 L1642.6 940.7 L1705.9 950.0Z M1717.1 934.1 L1656.5 925.6 L1669.1 911.9 L1727.3 919.7Z M1736.5 906.5 L1680.6 899.4 L1691.2 887.9 L1745.1 894.4Z M1752.9 883.3 L1701.0 877.3 L1710.0 867.6 L1760.1 873.1Z M1519.2 1074.6 L1440.4 1057.0 L1471.5 1029.6 L1546.4 1045.0Z M1570.4 1019.1 L1499.0 1005.5 L1523.5 984.0 L1591.5 996.1Z M1610.4 975.6 L1545.4 964.8 L1565.1 947.5 L1627.3 957.2Z M1642.6 940.7 L1582.9 931.8 L1599.1 917.6 L1656.5 925.6Z M1669.1 911.9 L1613.8 904.6 L1627.4 892.7 L1680.6 899.4Z M1691.2 887.9 L1639.9 881.8 L1651.4 871.6 L1701.0 877.3Z M1710.0 867.6 L1662.0 862.3 L1671.9 853.6 L1718.3 858.5Z M1404.8 1088.3 L1328.3 1069.6 L1367.5 1040.7 L1440.4 1057.0Z M1471.5 1029.6 L1401.9 1015.3 L1432.5 992.8 L1499.0 1005.5Z M1523.5 984.0 L1459.7 972.6 L1484.2 954.6 L1545.4 964.8Z M1565.1 947.5 L1506.3 938.3 L1526.4 923.5 L1582.9 931.8Z M1599.1 917.6 L1544.6 910.0 L1561.4 897.6 L1613.8 904.6Z M1627.4 892.7 L1576.7 886.3 L1590.9 875.9 L1639.9 881.8Z M1651.4 871.6 L1604.0 866.2 L1616.1 857.2 L1662.0 862.3Z M1283.3 1102.8 L1209.6 1083.0 L1257.7 1052.5 L1328.3 1069.6Z M1367.5 1040.7 L1299.8 1025.6 L1337.1 1002.0 L1401.9 1015.3Z M1432.5 992.8 L1370.2 980.9 L1399.9 962.0 L1459.7 972.6Z M1484.2 954.6 L1426.6 945.0 L1450.8 929.6 L1506.3 938.3Z M1526.4 923.5 L1472.8 915.6 L1492.9 902.8 L1544.6 910.0Z M1561.4 897.6 L1511.4 891.0 L1528.4 880.2 L1576.7 886.3Z M1590.9 875.9 L1544.1 870.2 L1558.6 861.0 L1604.0 866.2Z M1616.1 857.2 L1572.1 852.4 L1584.7 844.4 L1627.4 848.9Z M1257.7 1052.5 L1192.4 1036.5 L1236.9 1011.6 L1299.8 1025.6Z M1337.1 1002.0 L1276.5 989.5 L1311.8 969.7 L1370.2 980.9Z M1399.9 962.0 L1343.5 952.0 L1372.2 935.9 L1426.6 945.0Z M1450.8 929.6 L1398.3 921.4 L1422.0 908.1 L1472.8 915.6Z M1492.9 902.8 L1443.8 895.9 L1463.8 884.7 L1511.4 891.0Z M1528.4 880.2 L1482.3 874.4 L1499.4 864.8 L1544.1 870.2Z M1558.6 861.0 L1515.2 856.0 L1529.9 847.7 L1572.1 852.4Z M1141.8 1064.8 L1079.1 1048.0 L1131.7 1021.8 L1192.4 1036.5Z M1236.9 1011.6 L1178.2 998.5 L1219.7 977.8 L1276.5 989.5Z M1311.8 969.7 L1256.9 959.3 L1290.4 942.5 L1343.5 952.0Z M1372.2 935.9 L1320.8 927.4 L1348.5 913.6 L1398.3 921.4Z M1422.0 908.1 L1373.8 900.9 L1397.0 889.4 L1443.8 895.9Z M1463.8 884.7 L1418.4 878.7 L1438.2 868.8 L1482.3 874.4Z M1499.4 864.8 L1456.5 859.7 L1473.5 851.2 L1515.2 856.0Z M1529.9 847.7 L1489.4 843.2 L1504.2 835.9 L1543.7 840.0Z M1019.1 1077.9 L959.5 1060.1 L1021.0 1032.4 L1079.1 1048.0Z M1131.7 1021.8 L1075.2 1008.0 L1123.4 986.3 L1178.2 998.5Z M1219.7 977.8 L1166.5 966.9 L1205.3 949.4 L1256.9 959.3Z M1290.4 942.5 L1240.3 933.6 L1272.2 919.3 L1320.8 927.4Z M1348.5 913.6 L1301.3 906.2 L1327.9 894.2 L1373.8 900.9Z M1397.0 889.4 L1352.5 883.1 L1375.1 872.9 L1418.4 878.7Z M1438.2 868.8 L1396.0 863.5 L1415.5 854.7 L1456.5 859.7Z M1473.5 851.2 L1433.6 846.6 L1450.5 839.0 L1489.4 843.2Z M889.2 1091.8 L833.1 1073.0 L904.4 1043.7 L959.5 1060.1Z M1021.0 1032.4 L967.0 1018.0 L1022.5 995.2 L1075.2 1008.0Z M1123.4 986.3 L1072.0 974.9 L1116.4 956.6 L1166.5 966.9Z M1205.3 949.4 L1156.6 940.1 L1192.9 925.2 L1240.3 933.6Z M1272.2 919.3 L1226.1 911.6 L1256.4 899.1 L1301.3 906.2Z M1327.9 894.2 L1284.2 887.7 L1309.9 877.2 L1352.5 883.1Z M1375.1 872.9 L1333.6 867.4 L1355.7 858.4 L1396.0 863.5Z M1415.5 854.7 L1376.1 850.0 L1395.2 842.1 L1433.6 846.6Z M1450.5 839.0 L1413.0 834.8 L1429.7 828.0 L1466.3 831.8Z M751.3 1106.6 L699.2 1086.5 L781.3 1055.6 L833.1 1073.0Z M904.4 1043.7 L853.2 1028.4 L916.7 1004.5 L967.0 1018.0Z M1022.5 995.2 L973.2 983.2 L1023.8 964.1 L1072.0 974.9Z M1116.4 956.6 L1069.3 946.9 L1110.5 931.4 L1156.6 940.1Z M1192.9 925.2 L1148.0 917.2 L1182.3 904.3 L1226.1 911.6Z M1256.4 899.1 L1213.7 892.5 L1242.6 881.6 L1284.2 887.7Z M1309.9 877.2 L1269.3 871.5 L1294.0 862.2 L1333.6 867.4Z M1355.7 858.4 L1317.0 853.5 L1338.3 845.4 L1376.1 850.0Z M1395.2 842.1 L1358.3 837.9 L1377.0 830.9 L1413.0 834.8Z M781.3 1055.6 L733.4 1039.4 L805.7 1014.2 L853.2 1028.4Z M916.7 1004.5 L869.8 991.9 L927.0 971.9 L973.2 983.2Z M1023.8 964.1 L978.4 954.0 L1024.9 937.8 L1069.3 946.9Z M1110.5 931.4 L1067.0 923.1 L1105.5 909.7 L1148.0 917.2Z M1182.3 904.3 L1140.7 897.4 L1173.0 886.1 L1213.7 892.5Z M1242.6 881.6 L1202.8 875.7 L1230.4 866.1 L1269.3 871.5Z M1294.0 862.2 L1256.0 857.1 L1279.8 848.8 L1317.0 853.5Z M1338.3 845.4 L1302.1 841.1 L1322.8 833.8 L1358.3 837.9Z M1377.0 830.9 L1342.3 827.0 L1360.5 820.7 L1394.5 824.2Z M651.4 1068.1 L607.1 1051.1 L689.0 1024.5 L733.4 1039.4Z M805.7 1014.2 L761.4 1001.0 L825.8 980.1 L869.8 991.9Z M927.0 971.9 L883.6 961.3 L935.7 944.4 L978.4 954.0Z M1024.9 937.8 L982.8 929.1 L1025.8 915.2 L1067.0 923.1Z M1105.5 909.7 L1065.0 902.5 L1101.0 890.8 L1140.7 897.4Z M1173.0 886.1 L1134.2 880.0 L1164.9 870.1 L1202.8 875.7Z M1230.4 866.1 L1193.2 860.9 L1219.6 852.3 L1256.0 857.1Z M1279.8 848.8 L1244.2 844.3 L1267.2 836.9 L1302.1 841.1Z M1322.8 833.8 L1288.7 829.9 L1308.8 823.3 L1342.3 827.0Z M513.8 1081.4 L473.8 1063.3 L566.2 1035.3 L607.1 1051.1Z M689.0 1024.5 L647.6 1010.6 L719.9 988.7 L761.4 1001.0Z M825.8 980.1 L784.6 969.0 L842.7 951.4 L883.6 961.3Z M935.7 944.4 L895.3 935.4 L943.1 921.0 L982.8 929.1Z M1025.8 915.2 L986.6 907.7 L1026.6 895.6 L1065.0 902.5Z M1101.0 890.8 L1063.3 884.5 L1097.2 874.2 L1134.2 880.0Z M1164.9 870.1 L1128.5 864.7 L1157.6 855.9 L1193.2 860.9Z M1219.6 852.3 L1184.7 847.7 L1210.0 840.0 L1244.2 844.3Z M1267.2 836.9 L1233.6 832.8 L1255.8 826.1 L1288.7 829.9Z M1308.8 823.3 L1276.6 819.8 L1296.1 813.8 L1327.8 817.2Z M566.2 1035.3 L528.1 1020.7 L609.0 997.6 L647.6 1010.6Z M719.9 988.7 L681.1 977.1 L745.9 958.6 L784.6 969.0Z M842.7 951.4 L804.2 942.0 L857.2 926.9 L895.3 935.4Z M943.1 921.0 L905.4 913.2 L949.5 900.7 L986.6 907.7Z M1026.6 895.6 L990.0 889.1 L1027.3 878.5 L1063.3 884.5Z M1097.2 874.2 L1061.8 868.7 L1093.7 859.6 L1128.5 864.7Z M1157.6 855.9 L1123.5 851.1 L1151.2 843.2 L1184.7 847.7Z M1210.0 840.0 L1177.1 835.8 L1201.3 828.9 L1233.6 832.8Z M1255.8 826.1 L1224.1 822.4 L1245.4 816.4 L1276.6 819.8Z M609.0 997.6 L572.9 985.5 L644.7 966.2 L681.1 977.1Z M745.9 958.6 L709.4 948.9 L767.9 933.2 L804.2 942.0Z M857.2 926.9 L821.0 918.9 L869.6 905.9 L905.4 913.2Z M949.5 900.7 L914.1 893.9 L955.1 882.9 L990.0 889.1Z M1027.3 878.5 L992.9 872.8 L1027.9 863.4 L1061.8 868.7Z M1093.7 859.6 L1060.4 854.6 L1090.7 846.5 L1123.5 851.1Z M1151.2 843.2 L1118.9 838.9 L1145.4 831.8 L1177.1 835.8Z M1201.3 828.9 L1170.2 825.2 L1193.5 818.9 L1224.1 822.4Z M1245.4 816.4 L1215.4 813.0 L1236.0 807.5 L1265.6 810.6Z M492.7 1007.0 L459.6 994.3 L539.1 974.1 L572.9 985.5Z M644.7 966.2 L610.5 956.0 L675.0 939.6 L709.4 948.9Z M767.9 933.2 L733.5 924.8 L786.8 911.3 L821.0 918.9Z M869.6 905.9 L835.6 898.9 L880.4 887.5 L914.1 893.9Z M955.1 882.9 L921.8 877.0 L960.0 867.3 L992.9 872.8Z M1027.9 863.4 L995.5 858.3 L1028.4 849.9 L1060.4 854.6Z M1090.7 846.5 L1059.2 842.1 L1087.9 834.8 L1118.9 838.9Z M1145.4 831.8 L1114.9 828.0 L1140.2 821.6 L1170.2 825.2Z M1193.5 818.9 L1163.9 815.5 L1186.3 809.8 L1215.4 813.0Z M539.1 974.1 L507.4 963.4 L578.2 946.4 L610.5 956.0Z M675.0 939.6 L642.4 930.9 L700.9 916.8 L733.5 924.8Z M786.8 911.3 L754.2 904.0 L803.2 892.2 L835.6 898.9Z M880.4 887.5 L848.3 881.4 L889.9 871.3 L921.8 877.0Z M960.0 867.3 L928.5 862.0 L964.4 853.4 L995.5 858.3Z M1028.4 849.9 L997.8 845.4 L1028.9 837.9 L1059.2 842.1Z M1087.9 834.8 L1058.1 830.9 L1085.5 824.3 L1114.9 828.0Z M1140.2 821.6 L1111.2 818.1 L1135.4 812.2 L1163.9 815.5Z M1186.3 809.8 L1158.3 806.7 L1179.8 801.6 L1207.5 804.5Z" fill="#7aac7a"/><path d="M2180.7 1020.2 L2087.9 1006.4 L2079.6 984.8 L2166.8 997.0Z M2154.4 976.4 L2072.2 965.4 L2065.5 948.0 L2143.2 957.9Z M2133.2 941.2 L2059.5 932.3 L2054.0 918.0 L2124.1 926.1Z M2115.8 912.3 L2049.0 904.9 L2044.4 893.0 L2108.3 899.7Z M2119.9 1090.0 L2014.1 1071.2 L2009.3 1042.0 L2107.8 1058.4Z M2097.2 1030.8 L2005.0 1016.4 L2001.3 993.6 L2087.9 1006.4Z M2079.6 984.8 L1997.9 973.4 L1994.9 955.2 L2072.2 965.4Z M2065.5 948.0 L1992.2 938.8 L1989.7 923.9 L2059.5 932.3Z M2054.0 918.0 L1987.5 910.3 L1985.5 897.9 L2049.0 904.9Z M2019.6 1104.7 L1914.8 1084.7 L1916.5 1053.9 L2014.1 1071.2Z M2009.3 1042.0 L1917.9 1026.8 L1919.1 1002.9 L2005.0 1016.4Z M2001.3 993.6 L1920.3 981.7 L1921.3 962.7 L1997.9 973.4Z M1994.9 955.2 L1922.2 945.5 L1923.0 930.0 L1992.2 938.8Z M1989.7 923.9 L1923.7 915.9 L1924.4 903.1 L1987.5 910.3Z M1985.5 897.9 L1925.0 891.3 L1925.6 880.4 L1983.6 886.5Z M1916.5 1053.9 L1826.1 1037.8 L1832.9 1012.7 L1917.9 1026.8Z M1919.1 1002.9 L1838.9 990.4 L1844.3 970.5 L1920.3 981.7Z M1921.3 962.7 L1849.2 952.6 L1853.5 936.4 L1922.2 945.5Z M1923.0 930.0 L1857.5 921.8 L1861.1 908.4 L1923.7 915.9Z M1924.4 903.1 L1864.4 896.2 L1867.4 884.9 L1925.0 891.3Z M1818.4 1066.4 L1729.4 1049.4 L1742.3 1022.9 L1826.1 1037.8Z M1832.9 1012.7 L1753.7 999.5 L1763.9 978.6 L1838.9 990.4Z M1844.3 970.5 L1773.0 959.9 L1781.2 943.1 L1849.2 952.6Z M1853.5 936.4 L1788.6 927.8 L1795.4 913.9 L1857.5 921.8Z M1861.1 908.4 L1801.6 901.2 L1807.3 889.6 L1864.4 896.2Z M1867.4 884.9 L1812.5 878.9 L1817.3 869.0 L1870.2 874.5Z M1714.7 1079.6 L1627.2 1061.6 L1646.9 1033.7 L1729.4 1049.4Z M1742.3 1022.9 L1664.3 1009.0 L1679.7 987.1 L1753.7 999.5Z M1763.9 978.6 L1693.5 967.6 L1705.9 950.0 L1773.0 959.9Z M1781.2 943.1 L1717.1 934.1 L1727.3 919.7 L1788.6 927.8Z M1795.4 913.9 L1736.5 906.5 L1745.1 894.4 L1801.6 901.2Z M1807.3 889.6 L1752.9 883.3 L1760.1 873.1 L1812.5 878.9Z M1604.7 1093.6 L1519.2 1074.6 L1546.4 1045.0 L1627.2 1061.6Z M1646.9 1033.7 L1570.4 1019.1 L1591.5 996.1 L1664.3 1009.0Z M1679.7 987.1 L1610.4 975.6 L1627.3 957.2 L1693.5 967.6Z M1705.9 950.0 L1642.6 940.7 L1656.5 925.6 L1717.1 934.1Z M1727.3 919.7 L1669.1 911.9 L1680.6 899.4 L1736.5 906.5Z M1745.1 894.4 L1691.2 887.9 L1701.0 877.3 L1752.9 883.3Z M1760.1 873.1 L1710.0 867.6 L1718.3 858.5 L1766.8 863.6Z M1487.9 1108.5 L1404.8 1088.3 L1440.4 1057.0 L1519.2 1074.6Z M1546.4 1045.0 L1471.5 1029.6 L1499.0 1005.5 L1570.4 1019.1Z M1591.5 996.1 L1523.5 984.0 L1545.4 964.8 L1610.4 975.6Z M1627.3 957.2 L1565.1 947.5 L1582.9 931.8 L1642.6 940.7Z M1656.5 925.6 L1599.1 917.6 L1613.8 904.6 L1669.1 911.9Z M1680.6 899.4 L1627.4 892.7 L1639.9 881.8 L1691.2 887.9Z M1701.0 877.3 L1651.4 871.6 L1662.0 862.3 L1710.0 867.6Z M1440.4 1057.0 L1367.5 1040.7 L1401.9 1015.3 L1471.5 1029.6Z M1499.0 1005.5 L1432.5 992.8 L1459.7 972.6 L1523.5 984.0Z M1545.4 964.8 L1484.2 954.6 L1506.3 938.3 L1565.1 947.5Z M1582.9 931.8 L1526.4 923.5 L1544.6 910.0 L1599.1 917.6Z M1613.8 904.6 L1561.4 897.6 L1576.7 886.3 L1627.4 892.7Z M1639.9 881.8 L1590.9 875.9 L1604.0 866.2 L1651.4 871.6Z M1662.0 862.3 L1616.1 857.2 L1627.4 848.9 L1671.9 853.6Z M1328.3 1069.6 L1257.7 1052.5 L1299.8 1025.6 L1367.5 1040.7Z M1401.9 1015.3 L1337.1 1002.0 L1370.2 980.9 L1432.5 992.8Z M1459.7 972.6 L1399.9 962.0 L1426.6 945.0 L1484.2 954.6Z M1506.3 938.3 L1450.8 929.6 L1472.8 915.6 L1526.4 923.5Z M1544.6 910.0 L1492.9 902.8 L1511.4 891.0 L1561.4 897.6Z M1576.7 886.3 L1528.4 880.2 L1544.1 870.2 L1590.9 875.9Z M1604.0 866.2 L1558.6 861.0 L1572.1 852.4 L1616.1 857.2Z M1209.6 1083.0 L1141.8 1064.8 L1192.4 1036.5 L1257.7 1052.5Z M1299.8 1025.6 L1236.9 1011.6 L1276.5 989.5 L1337.1 1002.0Z M1370.2 980.9 L1311.8 969.7 L1343.5 952.0 L1399.9 962.0Z M1426.6 945.0 L1372.2 935.9 L1398.3 921.4 L1450.8 929.6Z M1472.8 915.6 L1422.0 908.1 L1443.8 895.9 L1492.9 902.8Z M1511.4 891.0 L1463.8 884.7 L1482.3 874.4 L1528.4 880.2Z M1544.1 870.2 L1499.4 864.8 L1515.2 856.0 L1558.6 861.0Z M1572.1 852.4 L1529.9 847.7 L1543.7 840.0 L1584.7 844.4Z M1083.8 1097.2 L1019.1 1077.9 L1079.1 1048.0 L1141.8 1064.8Z M1192.4 1036.5 L1131.7 1021.8 L1178.2 998.5 L1236.9 1011.6Z M1276.5 989.5 L1219.7 977.8 L1256.9 959.3 L1311.8 969.7Z M1343.5 952.0 L1290.4 942.5 L1320.8 927.4 L1372.2 935.9Z M1398.3 921.4 L1348.5 913.6 L1373.8 900.9 L1422.0 908.1Z M1443.8 895.9 L1397.0 889.4 L1418.4 878.7 L1463.8 884.7Z M1482.3 874.4 L1438.2 868.8 L1456.5 859.7 L1499.4 864.8Z M1515.2 856.0 L1473.5 851.2 L1489.4 843.2 L1529.9 847.7Z M1079.1 1048.0 L1021.0 1032.4 L1075.2 1008.0 L1131.7 1021.8Z M1178.2 998.5 L1123.4 986.3 L1166.5 966.9 L1219.7 977.8Z M1256.9 959.3 L1205.3 949.4 L1240.3 933.6 L1290.4 942.5Z M1320.8 927.4 L1272.2 919.3 L1301.3 906.2 L1348.5 913.6Z M1373.8 900.9 L1327.9 894.2 L1352.5 883.1 L1397.0 889.4Z M1418.4 878.7 L1375.1 872.9 L1396.0 863.5 L1438.2 868.8Z M1456.5 859.7 L1415.5 854.7 L1433.6 846.6 L1473.5 851.2Z M1489.4 843.2 L1450.5 839.0 L1466.3 831.8 L1504.2 835.9Z M959.5 1060.1 L904.4 1043.7 L967.0 1018.0 L1021.0 1032.4Z M1075.2 1008.0 L1022.5 995.2 L1072.0 974.9 L1123.4 986.3Z M1166.5 966.9 L1116.4 956.6 L1156.6 940.1 L1205.3 949.4Z M1240.3 933.6 L1192.9 925.2 L1226.1 911.6 L1272.2 919.3Z M1301.3 906.2 L1256.4 899.1 L1284.2 887.7 L1327.9 894.2Z M1352.5 883.1 L1309.9 877.2 L1333.6 867.4 L1375.1 872.9Z M1396.0 863.5 L1355.7 858.4 L1376.1 850.0 L1415.5 854.7Z M1433.6 846.6 L1395.2 842.1 L1413.0 834.8 L1450.5 839.0Z M833.1 1073.0 L781.3 1055.6 L853.2 1028.4 L904.4 1043.7Z M967.0 1018.0 L916.7 1004.5 L973.2 983.2 L1022.5 995.2Z M1072.0 974.9 L1023.8 964.1 L1069.3 946.9 L1116.4 956.6Z M1156.6 940.1 L1110.5 931.4 L1148.0 917.2 L1192.9 925.2Z M1226.1 911.6 L1182.3 904.3 L1213.7 892.5 L1256.4 899.1Z M1284.2 887.7 L1242.6 881.6 L1269.3 871.5 L1309.9 877.2Z M1333.6 867.4 L1294.0 862.2 L1317.0 853.5 L1355.7 858.4Z M1376.1 850.0 L1338.3 845.4 L1358.3 837.9 L1395.2 842.1Z M1413.0 834.8 L1377.0 830.9 L1394.5 824.2 L1429.7 828.0Z M699.2 1086.5 L651.4 1068.1 L733.4 1039.4 L781.3 1055.6Z M853.2 1028.4 L805.7 1014.2 L869.8 991.9 L916.7 1004.5Z M973.2 983.2 L927.0 971.9 L978.4 954.0 L1023.8 964.1Z M1069.3 946.9 L1024.9 937.8 L1067.0 923.1 L1110.5 931.4Z M1148.0 917.2 L1105.5 909.7 L1140.7 897.4 L1182.3 904.3Z M1213.7 892.5 L1173.0 886.1 L1202.8 875.7 L1242.6 881.6Z M1269.3 871.5 L1230.4 866.1 L1256.0 857.1 L1294.0 862.2Z M1317.0 853.5 L1279.8 848.8 L1302.1 841.1 L1338.3 845.4Z M1358.3 837.9 L1322.8 833.8 L1342.3 827.0 L1377.0 830.9Z M557.3 1100.9 L513.8 1081.4 L607.1 1051.1 L651.4 1068.1Z M733.4 1039.4 L689.0 1024.5 L761.4 1001.0 L805.7 1014.2Z M869.8 991.9 L825.8 980.1 L883.6 961.3 L927.0 971.9Z M978.4 954.0 L935.7 944.4 L982.8 929.1 L1024.9 937.8Z M1067.0 923.1 L1025.8 915.2 L1065.0 902.5 L1105.5 909.7Z M1140.7 897.4 L1101.0 890.8 L1134.2 880.0 L1173.0 886.1Z M1202.8 875.7 L1164.9 870.1 L1193.2 860.9 L1230.4 866.1Z M1256.0 857.1 L1219.6 852.3 L1244.2 844.3 L1279.8 848.8Z M1302.1 841.1 L1267.2 836.9 L1288.7 829.9 L1322.8 833.8Z M1342.3 827.0 L1308.8 823.3 L1327.8 817.2 L1360.5 820.7Z M607.1 1051.1 L566.2 1035.3 L647.6 1010.6 L689.0 1024.5Z M761.4 1001.0 L719.9 988.7 L784.6 969.0 L825.8 980.1Z M883.6 961.3 L842.7 951.4 L895.3 935.4 L935.7 944.4Z M982.8 929.1 L943.1 921.0 L986.6 907.7 L1025.8 915.2Z M1065.0 902.5 L1026.6 895.6 L1063.3 884.5 L1101.0 890.8Z M1134.2 880.0 L1097.2 874.2 L1128.5 864.7 L1164.9 870.1Z M1193.2 860.9 L1157.6 855.9 L1184.7 847.7 L1219.6 852.3Z M1244.2 844.3 L1210.0 840.0 L1233.6 832.8 L1267.2 836.9Z M1288.7 829.9 L1255.8 826.1 L1276.6 819.8 L1308.8 823.3Z M473.8 1063.3 L436.8 1046.7 L528.1 1020.7 L566.2 1035.3Z M647.6 1010.6 L609.0 997.6 L681.1 977.1 L719.9 988.7Z M784.6 969.0 L745.9 958.6 L804.2 942.0 L842.7 951.4Z M895.3 935.4 L857.2 926.9 L905.4 913.2 L943.1 921.0Z M986.6 907.7 L949.5 900.7 L990.0 889.1 L1026.6 895.6Z M1063.3 884.5 L1027.3 878.5 L1061.8 868.7 L1097.2 874.2Z M1128.5 864.7 L1093.7 859.6 L1123.5 851.1 L1157.6 855.9Z M1184.7 847.7 L1151.2 843.2 L1177.1 835.8 L1210.0 840.0Z M1233.6 832.8 L1201.3 828.9 L1224.1 822.4 L1255.8 826.1Z M1276.6 819.8 L1245.4 816.4 L1265.6 810.6 L1296.1 813.8Z M528.1 1020.7 L492.7 1007.0 L572.9 985.5 L609.0 997.6Z M681.1 977.1 L644.7 966.2 L709.4 948.9 L745.9 958.6Z M804.2 942.0 L767.9 933.2 L821.0 918.9 L857.2 926.9Z M905.4 913.2 L869.6 905.9 L914.1 893.9 L949.5 900.7Z M990.0 889.1 L955.1 882.9 L992.9 872.8 L1027.3 878.5Z M1061.8 868.7 L1027.9 863.4 L1060.4 854.6 L1093.7 859.6Z M1123.5 851.1 L1090.7 846.5 L1118.9 838.9 L1151.2 843.2Z M1177.1 835.8 L1145.4 831.8 L1170.2 825.2 L1201.3 828.9Z M1224.1 822.4 L1193.5 818.9 L1215.4 813.0 L1245.4 816.4Z M572.9 985.5 L539.1 974.1 L610.5 956.0 L644.7 966.2Z M709.4 948.9 L675.0 939.6 L733.5 924.8 L767.9 933.2Z M821.0 918.9 L786.8 911.3 L835.6 898.9 L869.6 905.9Z M914.1 893.9 L880.4 887.5 L921.8 877.0 L955.1 882.9Z M992.9 872.8 L960.0 867.3 L995.5 858.3 L1027.9 863.4Z M1060.4 854.6 L1028.4 849.9 L1059.2 842.1 L1090.7 846.5Z M1118.9 838.9 L1087.9 834.8 L1114.9 828.0 L1145.4 831.8Z M1170.2 825.2 L1140.2 821.6 L1163.9 815.5 L1193.5 818.9Z M1215.4 813.0 L1186.3 809.8 L1207.5 804.5 L1236.0 807.5Z M610.5 956.0 L578.2 946.4 L642.4 930.9 L675.0 939.6Z M733.5 924.8 L700.9 916.8 L754.2 904.0 L786.8 911.3Z M835.6 898.9 L803.2 892.2 L848.3 881.4 L880.4 887.5Z M921.8 877.0 L889.9 871.3 L928.5 862.0 L960.0 867.3Z M995.5 858.3 L964.4 853.4 L997.8 845.4 L1028.4 849.9Z M1059.2 842.1 L1028.9 837.9 L1058.1 830.9 L1087.9 834.8Z M1114.9 828.0 L1085.5 824.3 L1111.2 818.1 L1140.2 821.6Z M1163.9 815.5 L1135.4 812.2 L1158.3 806.7 L1186.3 809.8Z" fill="#4c824c"/></g>
<path d="M848.3 881.4 L2259 1150.4 M1543.7 840 L422.8 1467" stroke="#111" stroke-width="1.4" fill="none"/>
<defs>
<linearGradient id="gcyl" gradientUnits="userSpaceOnUse" x1="1250" x2="1380" y1="0" y2="0">
 <stop offset="0" stop-color="#8e8e8e"/><stop offset="0.1" stop-color="#cfcfcf"/><stop offset="0.28" stop-color="#f4f4f4"/>
 <stop offset="0.42" stop-color="#ffffff"/><stop offset="0.58" stop-color="#e8e8e8"/><stop offset="0.72" stop-color="#bcbcbc"/><stop offset="0.86" stop-color="#8a8a8a"/><stop offset="1" stop-color="#646464"/></linearGradient>
<linearGradient id="gj2low" gradientUnits="userSpaceOnUse" x1="1250" x2="1372" y1="0" y2="0">
 <stop offset="0" stop-color="#b8b8b8"/><stop offset="0.2" stop-color="#e8e8e8"/><stop offset="0.45" stop-color="#ffffff"/>
 <stop offset="0.7" stop-color="#d8d8d8"/><stop offset="0.9" stop-color="#9a9a9a"/><stop offset="1" stop-color="#8a8a8a"/></linearGradient>
<linearGradient id="gplateR" gradientUnits="userSpaceOnUse" x1="1322" x2="1380" y1="0" y2="0">
 <stop offset="0" stop-color="#f4f4f4"/><stop offset="0.3" stop-color="#ffffff"/><stop offset="0.42" stop-color="#c8c8c8"/>
 <stop offset="0.5" stop-color="#8a8a8a"/><stop offset="0.75" stop-color="#6c6c6c"/><stop offset="1" stop-color="#5a5a5a"/></linearGradient>
<linearGradient id="gplateR2" gradientUnits="userSpaceOnUse" x1="1322" x2="1376" y1="0" y2="0">
 <stop offset="0" stop-color="#e8e8e8"/><stop offset="0.3" stop-color="#b8b8b8"/><stop offset="0.45" stop-color="#8a8a8a"/>
 <stop offset="0.7" stop-color="#727272"/><stop offset="1" stop-color="#626262"/></linearGradient>
<linearGradient id="gaxis" x1="0" x2="0" y1="0" y2="1">
 <stop offset="0" stop-color="#f2f2f2"/><stop offset="0.3" stop-color="#ffffff"/><stop offset="0.62" stop-color="#d0d0d0"/><stop offset="0.88" stop-color="#7a7a7a"/><stop offset="1" stop-color="#3c3c3c"/></linearGradient>
<linearGradient id="gfore" gradientUnits="userSpaceOnUse" x1="1278" x2="1356" y1="0" y2="0">
 <stop offset="0" stop-color="#c4c4c4"/><stop offset="0.1" stop-color="#f2f2f2"/><stop offset="0.55" stop-color="#ffffff"/><stop offset="0.68" stop-color="#e8e8e8"/>
 <stop offset="0.74" stop-color="#8a8a8a"/><stop offset="0.8" stop-color="#626262"/><stop offset="1" stop-color="#5a5a5a"/></linearGradient>
<linearGradient id="glink" gradientUnits="userSpaceOnUse" x1="1277" x2="1338" y1="0" y2="0">
 <stop offset="0" stop-color="#e8e8e8"/><stop offset="0.3" stop-color="#ffffff"/><stop offset="0.8" stop-color="#f6f6f6"/><stop offset="1" stop-color="#d8d8d8"/></linearGradient>
<linearGradient id="gwrist" x1="0" x2="0" y1="0" y2="1">
 <stop offset="0" stop-color="#8c8c8c"/><stop offset="0.35" stop-color="#6e6e6e"/><stop offset="1" stop-color="#3e3e3e"/></linearGradient>
</defs><path d="M1371 851 L1398 851 L1400 945 L1398 958 L1346 990 L1334 994 L1345 975 L1371 957 Z" fill="#5a5a5a" /><path d="M1369 843 L1393 845 L1399 851 L1371 852 Z" fill="#d8d8d8" /><path d="M1400 900 L1404 902 L1404 925 L1400 928 Z" fill="#404040" /><path d="M1244 966 L1259 953 L1345 960 L1346 975 L1334 993 L1245 977 Z" fill="#f2f2f2" /><path d="M1246 966 L1334 980 L1334 993 L1245 977 Z" fill="#e6e6e6" /><path d="M1257 848 L1372 848 L1368 955 Q1312 975 1261 957 Z" fill="url(#gcyl)" /><path d="M1368 914 L1381 912 L1382 952 L1368 956 Z" fill="#e8e8e8" /><path d="M1262 862 Q1315 868 1370 860" fill="none" stroke="#fafafa" stroke-width="1" stroke-dasharray="2 14" opacity="0.9"/><path d="M1246 724 Q1250 703 1262 701 L1357 703 Q1376 708 1379 728 L1379 760 L1373 828 L1372 850 L1257 850 L1254 805 L1245 760 Z" fill="url(#gcyl)" /><path d="M1246 724 Q1250 703 1262 701 L1266 703 Q1258 740 1258 790 L1256 806 L1245 760 Z" fill="#d4d4d4" /><path d="M1324 703 L1340 703 Q1334 740 1338 790 Q1334 806 1322 812 Q1328 790 1326 760 Z" fill="#ffffff" /><path d="M1262 716 Q1263 704 1276 703 L1326 703 Q1322 740 1325 784 L1290 785 Q1266 783 1262 760 Z" fill="url(#gaxis)" /><path d="M1264 712 Q1259 750 1266 782 M1326 712 Q1321 750 1326 790" fill="none" stroke="#404040" stroke-width="1.1" stroke-dasharray="3 4"/><path d="M1256 784 L1293 785 L1293 800 L1262 806 Q1256 798 1256 790 Z" fill="#7c7c7c" /><path d="M1293 785 L1325 785 Q1325 798 1318 801 L1293 801 Z" fill="#62a262" /><path d="M1258 801 Q1290 796 1324 799 Q1318 812 1290 815 Q1266 812 1258 805 Z" fill="#fbfbfb" /><path d="M1261 519 Q1264 511 1273 510 L1280 520 L1283 703 L1277 703 L1272 660 L1264 568 Q1257 560 1257 540 Z" fill="#d6d6d6" /><path d="M1263 570 L1268 610 L1274 690 L1278 703 L1282 703 L1279 640 L1273 570 Z" fill="#fafafa" /><path d="M1328 510 L1354 509 Q1366 514 1370 536 L1373 576 L1375 641 L1370 658 L1364 703 L1324 703 L1333 674 L1338 641 L1338 609 L1334 573 L1325 544 Z" fill="url(#gplateR2)" /><path d="M1328 510 L1344 508 Q1336 540 1347 575 L1351 640 L1342 680 L1332 703 L1324 703 L1333 674 L1338 641 L1338 609 L1334 573 L1325 544 Z" fill="#f8f8f8" /><path d="M1350 660 L1372 650 L1364 703 L1334 703 Z" fill="#4e4e4e" opacity="0.35"/><path d="M1272 568 L1303 574 L1303 610 L1275 612 Z" fill="#6e6e6e" /><path d="M1303 580 L1337 580 L1337 611 L1303 611 Z" fill="#62a262" /><path d="M1322 599 L1322 611" fill="none" stroke="#fff" stroke-width="1.2"/><path d="M1277 612 Q1290 592 1300 606 Q1312 612 1340 610 L1340 641 L1335 674 L1327 703 L1282 703 Z" fill="url(#glink)" /><path d="M1262 525 Q1264 512 1276 511 L1328 511 L1326 545 L1334 573 Q1300 582 1276 574 Q1264 560 1262 540 Z" fill="url(#gaxis)" /><path d="M1273 518 Q1268 545 1276 572 M1326 516 Q1322 545 1330 575" fill="none" stroke="#404040" stroke-width="1.1" stroke-dasharray="3 4"/><path d="M1280 328 Q1283 320 1292 319 L1338 313 Q1350 314 1355 338 L1356 508 L1262 516 Q1272 498 1280 468 Z" fill="url(#gfore)" /><path d="M1280 430 Q1318 426 1338 428 L1356 434" fill="none" stroke="#1a1a1a" stroke-width="1.4" stroke-dasharray="8 3"/><path d="M1288 330 L1287 366 L1294 376 L1308 379 L1318 379 L1320 354 L1322 322 L1338 310 L1332 300 L1318 295 L1304 298 L1294 312 Z" fill="url(#gwrist)" /><path d="M1318 297 L1332 300 L1338 310 L1322 322 L1319 356 L1314 356 L1315 318 Z" fill="#8a8a8a" /><path d="M1289 336 L1318 332 M1289 358 L1318 356" fill="none" stroke="#2a2a2a" stroke-width="1"/>
<path d="M1195 1034 L1293 978 L1447 1009 L1447 1062 M1195 1034 L1195 1062 M1293 978 L1293 1062 M1195 1035 L1306 1060 M1447 1009 L1380 1061" stroke="#00e8e8" stroke-width="1.5" fill="none"/>
<path d="M1316 173 L1316 296" stroke="#ff0000" stroke-width="2"/><path d="M1243 263 L1314 297" stroke="#ff0000" stroke-width="1.3" stroke-dasharray="4 2"/><path d="M1330 300 L1437 279" stroke="#ff0000" stroke-width="2" stroke-dasharray="7 4"/>
</g></svg>
<div style="position:absolute;left:2095px;top:172.6px;width:43px;height:888px;background:#fafafa"></div>
<div style="position:absolute;left:2098px;top:178px;width:40px;height:821px;background:linear-gradient(90deg,#f8f8f8,#eeeeee);border-radius:0 0 4px 0"></div>
<svg style="left:0;top:0" width="2147" height="1354"><rect x="2098" y="250" width="37" height="36" fill="#dceefc" stroke="#3c8ef0" stroke-width="2"/><rect x="2098" y="548" width="37" height="37" fill="#dceefc" stroke="#3c8ef0" stroke-width="2"/><g transform="translate(2102,179.0) scale(1.68)"><ellipse cx="8" cy="9" rx="7.5" ry="3" fill="none" stroke="#505050" stroke-width="0.9" transform="rotate(-25 8 9)"/><circle cx="8.5" cy="8.5" r="4.5" fill="#4a9a20"/><circle cx="7.5" cy="7" r="1.8" fill="#90d060"/></g><g transform="translate(2102,216.5) scale(1.68)"><circle cx="8" cy="8" r="7" fill="#fff" stroke="#e02020" stroke-width="1.6"/><rect x="4" y="5" width="8" height="6" fill="#7a9a50"/><path d="M3 3 L13 13" stroke="#e02020" stroke-width="1.8"/></g><g transform="translate(2102,253.5) scale(1.68)"><circle cx="8" cy="8" r="6.5" fill="none" stroke="#202020" stroke-width="1.2"/><circle cx="8" cy="8" r="4.5" fill="#30a0f0"/><text x="5.5" y="11" font-size="7" font-family="Liberation Sans" font-weight="bold" fill="#102040">Z</text><path d="M13 5 L16 8 L12 9 Z" fill="#202020"/></g><g transform="translate(2102,291.0) scale(1.68)"><rect x="2" y="5" width="12" height="6" fill="#5ab0c0" stroke="#203040" stroke-width="1"/><path d="M8 1 V15 M0 8 H16" stroke="#203040" stroke-width="1.5"/></g><rect x="2103" y="327" width="27" height="2" fill="#c8c8c8"/><g transform="translate(2102,338.0) scale(1.68)"><path d="M2 1 L3 8 M3 4 L8 2 L10 5" stroke="#808080" stroke-width="1.5" fill="none"/><rect x="1" y="10" width="6" height="5" fill="#10a010"/><rect x="11" y="8" width="3" height="6" fill="#1020a0"/><rect x="10" y="13" width="6" height="2" fill="#1020a0"/></g><g transform="translate(2102,373.5) scale(1.68)"><rect x="0" y="5" width="16" height="6" fill="#a8e070" stroke="#405020" stroke-width="0.8"/><path d="M3 5v2M6 5v3M9 5v2M12 5v3" stroke="#405020" stroke-width="0.7"/></g><rect x="2103" y="411" width="27" height="2" fill="#c8c8c8"/><g transform="translate(2102,422.5) scale(1.68)"><rect x="0" y="4" width="16" height="11" fill="#707070" stroke="#404040" stroke-width="0.8"/><rect x="3" y="2" width="5" height="3" fill="#606060"/><circle cx="8" cy="9.5" r="3.5" fill="#c0d0d8" stroke="#303030" stroke-width="1"/></g><rect x="2103" y="458" width="27" height="2" fill="#c8c8c8"/><g transform="translate(2102,468.0) scale(1.68)"><rect x="0" y="2" width="16" height="13" fill="#fff" stroke="#303030" stroke-width="0.9"/><path d="M0 4.5h16M0 12.5h16" stroke="#303030" stroke-width="0.9"/><path d="M5 4v9M10 4v9" stroke="#303030" stroke-width="0.8"/><path d="M11 11 L15 1 L16 2 L12 12 Z" fill="#f0c020" stroke="#806010" stroke-width="0.5"/></g><g transform="translate(2102,505.5) scale(1.68)"><rect x="0" y="2" width="16" height="13" fill="#fff" stroke="#303030" stroke-width="0.9"/><path d="M0 4.5h16M0 12.5h16" stroke="#303030" stroke-width="0.9"/><path d="M5 4v9M10 4v9" stroke="#303030" stroke-width="0.8"/><circle cx="3" cy="13" r="2.5" fill="#e02020"/></g><rect x="2103" y="542" width="27" height="2" fill="#c8c8c8"/><g transform="translate(2102,553.5) scale(1.68)"><path d="M1 4 L9 1 L15 3 L15 13 L7 16 L1 13 Z" fill="#f08a30"/><path d="M9 5 L15 3 L15 13 L9 15 Z" fill="#4a2a10"/><text x="1.5" y="12" font-size="6" font-family="Liberation Sans" font-weight="bold" fill="#201000">3D</text></g><g transform="translate(2102,590.5) scale(1.68)"><rect x="0" y="2" width="16" height="12" fill="#80c0c8" stroke="#203040" stroke-width="1"/><text x="2.5" y="11" font-size="7" font-family="Liberation Sans" fill="#102030">2D</text></g><rect x="2103" y="626" width="27" height="2" fill="#c8c8c8"/><g transform="translate(2102,636.5) scale(1.68)"><rect x="2" y="6" width="10" height="8" fill="#3a8a50" stroke="#202020" stroke-width="1"/><path d="M7 10 V1" stroke="#1030c0" stroke-width="1.3"/><path d="M5 1 L7 -1 L9 1 Z" fill="#1030c0"/><path d="M7 10 L16 12" stroke="#10a010" stroke-width="1.2"/><path d="M7 10 L1 15" stroke="#c01010" stroke-width="1.4"/></g><g transform="translate(2102,673.5) scale(1.68)"><path d="M1 8 L8 2 L15 8" stroke="#2050c0" stroke-width="1.5" fill="none"/><rect x="3" y="8" width="10" height="6" fill="#fff" stroke="#505050" stroke-width="0.8"/><rect x="7" y="10" width="3" height="4" fill="#c03020"/><rect x="11" y="2" width="2" height="4" fill="#c03020"/></g><rect x="2103" y="710" width="27" height="2" fill="#c8c8c8"/><g transform="translate(2102,721.5) scale(1.68)"><rect x="1" y="1" width="15" height="15" fill="#e82020" stroke="#101010" stroke-width="1"/><text x="1.6" y="13" font-size="11" font-family="Liberation Sans" fill="#101010">+X</text></g><g transform="translate(2102,758.5) scale(1.68)"><rect x="1" y="1" width="15" height="15" fill="#20c030" stroke="#101010" stroke-width="1"/><text x="1.6" y="13" font-size="11" font-family="Liberation Sans" fill="#101010">+Y</text></g><g transform="translate(2102,795.0) scale(1.68)"><rect x="1" y="1" width="15" height="15" fill="#2a90e0" stroke="#101010" stroke-width="1"/><text x="1.6" y="13" font-size="11" font-family="Liberation Sans" fill="#101010">+Z</text></g><g transform="translate(2102,841.1) scale(1.68)"><rect x="1" y="1" width="15" height="15" fill="#e82020" stroke="#101010" stroke-width="1"/><text x="1.6" y="13" font-size="11" font-family="Liberation Sans" fill="#101010">-X</text></g><g transform="translate(2102,878.0) scale(1.68)"><rect x="1" y="1" width="15" height="15" fill="#20c030" stroke="#101010" stroke-width="1"/><text x="1.6" y="13" font-size="11" font-family="Liberation Sans" fill="#101010">-Y</text></g><g transform="translate(2102,914.8) scale(1.68)"><rect x="1" y="1" width="15" height="15" fill="#2a90e0" stroke="#101010" stroke-width="1"/><text x="1.6" y="13" font-size="11" font-family="Liberation Sans" fill="#101010">-Z</text></g><rect x="2103" y="830.6" width="27" height="2" fill="#c8c8c8"/><rect x="2103" y="951.5" width="27" height="2" fill="#c8c8c8"/><g transform="translate(2102,962.5) scale(1.68)"><circle cx="8.5" cy="8.5" r="7" fill="#eef4ff" stroke="#6080c0" stroke-width="1.2"/><text x="5" y="13" font-size="11" font-family="Liberation Sans" fill="#4060b0">?</text></g></svg>
<div style="position:absolute;left:0px;top:1069px;width:2147px;height:256px;background:#ff0000"></div>
<div style="position:absolute;left:4px;top:1073px;width:2139px;height:248px;background:#f0f0f0"></div>
<div style="position:absolute;left:4px;top:1074px;width:2139px;height:2px;background:#a0a0a0"></div>
<div style="position:absolute;left:4px;top:1076px;width:2139px;height:31px;background:#bfcddb"></div>
<div class="t" style="left:5px;top:1081.9px;font-size:20px;color:#465566;font-weight:normal;letter-spacing:-0.7px">Exclusive area</div>
<svg style="left:0;top:0" width="2147" height="1354"><path d="M2099 1085 h9 v9 h-9 z M2097 1094 h13 M2103.5 1094 v7" stroke="#3a4450" stroke-width="2" fill="none"/><rect x="2101" y="1086" width="3" height="8" fill="#3a4450"/><path d="M2124 1084 L2135 1095 M2135 1084 L2124 1095" stroke="#3a4450" stroke-width="2.6"/></svg>
<div style="position:absolute;left:4px;top:1107px;width:2139px;height:45px;background:linear-gradient(#ffffff,#f2f2f2)"></div>
<div class="t" style="left:7px;top:1119.9px;font-size:20px;color:#000;font-weight:normal;">Jump</div>
<div style="position:absolute;left:62px;top:1114px;width:123px;height:32px;background:#fff"></div>
<div class="t" style="left:193px;top:1119.9px;font-size:20px;color:#000;font-weight:normal;">Smart View</div>
<div style="position:absolute;left:4px;top:1152px;width:2139px;height:169px;background:#ababab"></div><div style="position:absolute;left:4px;top:1152px;width:1814px;height:35px;background:#f0f0f0;border-top:2px solid #646464;border-bottom:2px solid #8a8a8a"></div><div style="position:absolute;left:105px;top:1187px;width:1713px;height:32px;background:#ffffff"></div><div style="position:absolute;left:4px;top:1187px;width:101px;height:33px;background:#f0f0f0;border-bottom:2px solid #8a8a8a"></div><div style="position:absolute;left:105px;top:1220.5px;width:1713px;height:32px;background:#b0ffb0"></div><div style="position:absolute;left:4px;top:1220.5px;width:101px;height:33px;background:#f0f0f0;border-bottom:2px solid #8a8a8a"></div><div style="position:absolute;left:105px;top:1254px;width:1713px;height:32px;background:#ffffff"></div><div style="position:absolute;left:4px;top:1254px;width:101px;height:33px;background:#f0f0f0;border-bottom:2px solid #8a8a8a"></div><div style="position:absolute;left:105px;top:1287px;width:1713px;height:32px;background:#b0ffb0"></div><div style="position:absolute;left:4px;top:1287px;width:101px;height:33px;background:#f0f0f0;border-bottom:2px solid #8a8a8a"></div><svg style="left:0;top:0" width="2147" height="1354"><rect x="104" y="1152" width="2" height="35" fill="#8a8a8a"/><rect x="104" y="1187" width="2" height="133" fill="#8a8a8a"/><rect x="221.7" y="1152" width="2" height="35" fill="#8a8a8a"/><rect x="221.7" y="1187" width="2" height="133" fill="#e4e4e4"/><rect x="338.7" y="1152" width="2" height="35" fill="#8a8a8a"/><rect x="338.7" y="1187" width="2" height="133" fill="#e4e4e4"/><rect x="456.5" y="1152" width="2" height="35" fill="#8a8a8a"/><rect x="456.5" y="1187" width="2" height="133" fill="#e4e4e4"/><rect x="573.8" y="1152" width="2" height="35" fill="#8a8a8a"/><rect x="573.8" y="1187" width="2" height="133" fill="#e4e4e4"/><rect x="691.3" y="1152" width="2" height="35" fill="#8a8a8a"/><rect x="691.3" y="1187" width="2" height="133" fill="#e4e4e4"/><rect x="808.8" y="1152" width="2" height="35" fill="#8a8a8a"/><rect x="808.8" y="1187" width="2" height="133" fill="#e4e4e4"/><rect x="926.1" y="1152" width="2" height="35" fill="#8a8a8a"/><rect x="926.1" y="1187" width="2" height="133" fill="#e4e4e4"/><rect x="1044.2" y="1152" width="2" height="35" fill="#8a8a8a"/><rect x="1044.2" y="1187" width="2" height="133" fill="#e4e4e4"/><rect x="1161.6" y="1152" width="2" height="35" fill="#8a8a8a"/><rect x="1161.6" y="1187" width="2" height="133" fill="#e4e4e4"/><rect x="1279" y="1152" width="2" height="35" fill="#8a8a8a"/><rect x="1279" y="1187" width="2" height="133" fill="#e4e4e4"/><rect x="1497.2" y="1152" width="2" height="35" fill="#8a8a8a"/><rect x="1497.2" y="1187" width="2" height="133" fill="#e4e4e4"/><rect x="1698.8" y="1152" width="2" height="35" fill="#8a8a8a"/><rect x="1698.8" y="1187" width="2" height="133" fill="#e4e4e4"/><rect x="1816.5" y="1152" width="2" height="35" fill="#8a8a8a"/><rect x="1816.5" y="1187" width="2" height="133" fill="#8a8a8a"/><rect x="105" y="1219" width="1713" height="1.5" fill="#e8e8e8"/><rect x="105" y="1252.5" width="1713" height="1.5" fill="#e8e8e8"/><rect x="105" y="1286" width="1713" height="1.5" fill="#e8e8e8"/><rect x="4" y="1318" width="1814" height="2" fill="#8a8a8a"/><rect x="1750" y="1194" width="18" height="18" fill="#fff" stroke="#8a8a8a" stroke-width="1.5"/><rect x="1750" y="1227.5" width="18" height="18" fill="#fff" stroke="#8a8a8a" stroke-width="1.5"/><rect x="1750" y="1261" width="18" height="18" fill="#fff" stroke="#8a8a8a" stroke-width="1.5"/><rect x="1750" y="1294" width="18" height="18" fill="#fff" stroke="#8a8a8a" stroke-width="1.5"/><rect x="107" y="1188" width="114" height="30" fill="none" stroke="#000" stroke-width="1.2" stroke-dasharray="2 2"/><rect x="2115" y="1152" width="26" height="168" fill="#f0f0f0"/><path d="M2123 1171 L2133 1171 L2128 1166 Z M2123 1301 L2133 1301 L2128 1306 Z" fill="#404040"/><rect x="2117" y="1185" width="22" height="22" rx="2" fill="#e8e8e8" stroke="#b0b0b0"/></svg><div class="t" style="right:2049.0px;top:1157.9px;font-size:20px;font-weight:bold">No.</div><div class="t" style="right:1931.3px;top:1157.9px;font-size:20px;font-weight:normal">X</div><div class="t" style="right:1814.3px;top:1157.9px;font-size:20px;font-weight:normal">Y</div><div class="t" style="right:1696.5px;top:1157.9px;font-size:20px;font-weight:normal">Z</div><div class="t" style="right:1579.2px;top:1157.9px;font-size:20px;font-weight:normal">RX</div><div class="t" style="right:1461.7px;top:1157.9px;font-size:20px;font-weight:normal">RY</div><div class="t" style="right:1344.2px;top:1157.9px;font-size:20px;font-weight:normal">RZ</div><div class="t" style="right:1226.9px;top:1157.9px;font-size:20px;font-weight:normal">DX</div><div class="t" style="right:1108.8px;top:1157.9px;font-size:20px;font-weight:normal">DY</div><div class="t" style="right:991.4px;top:1157.9px;font-size:20px;font-weight:normal">DZ</div><div class="t" style="right:874.0px;top:1157.9px;font-size:20px;font-weight:normal">Enable</div><div class="t" style="left:1287.0px;top:1157.9px;font-size:20px">Usage</div><div class="t" style="left:1505.2px;top:1157.9px;font-size:20px">Macro</div><div class="t" style="left:1699.8px;width:117.70000000000005px;text-align:center;top:1157.9px;font-size:20px">SMART</div><div class="t" style="right:2049.0px;top:1190.9px;font-size:20px">0</div><div class="t" style="right:1931.3px;top:1190.9px;font-size:20px">400</div><div class="t" style="right:1814.3px;top:1190.9px;font-size:20px">250</div><div class="t" style="right:1696.5px;top:1190.9px;font-size:20px">0</div><div class="t" style="right:1579.2px;top:1190.9px;font-size:20px">0</div><div class="t" style="right:1461.7px;top:1190.9px;font-size:20px">0</div><div class="t" style="right:1344.2px;top:1190.9px;font-size:20px">0</div><div class="t" style="right:1226.9px;top:1190.9px;font-size:20px">100</div><div class="t" style="right:1108.8px;top:1190.9px;font-size:20px">100</div><div class="t" style="right:991.4px;top:1190.9px;font-size:20px">100</div><div class="t" style="right:874.0px;top:1190.9px;font-size:20px">1</div><div class="t" style="right:2049.0px;top:1224.4px;font-size:20px">1</div><div class="t" style="right:1931.3px;top:1224.4px;font-size:20px">400</div><div class="t" style="right:1814.3px;top:1224.4px;font-size:20px">-400</div><div class="t" style="right:1696.5px;top:1224.4px;font-size:20px">0</div><div class="t" style="right:1579.2px;top:1224.4px;font-size:20px">0</div><div class="t" style="right:1461.7px;top:1224.4px;font-size:20px">0</div><div class="t" style="right:1344.2px;top:1224.4px;font-size:20px">0</div><div class="t" style="right:1226.9px;top:1224.4px;font-size:20px">100</div><div class="t" style="right:1108.8px;top:1224.4px;font-size:20px">100</div><div class="t" style="right:991.4px;top:1224.4px;font-size:20px">50</div><div class="t" style="right:874.0px;top:1224.4px;font-size:20px">1</div><div class="t" style="right:2049.0px;top:1257.9px;font-size:20px">2</div><div class="t" style="right:1931.3px;top:1257.9px;font-size:20px">0</div><div class="t" style="right:1814.3px;top:1257.9px;font-size:20px">0</div><div class="t" style="right:1696.5px;top:1257.9px;font-size:20px">0</div><div class="t" style="right:1579.2px;top:1257.9px;font-size:20px">0</div><div class="t" style="right:1461.7px;top:1257.9px;font-size:20px">0</div><div class="t" style="right:1344.2px;top:1257.9px;font-size:20px">0</div><div class="t" style="right:1226.9px;top:1257.9px;font-size:20px">0</div><div class="t" style="right:1108.8px;top:1257.9px;font-size:20px">0</div><div class="t" style="right:991.4px;top:1257.9px;font-size:20px">0</div><div class="t" style="right:874.0px;top:1257.9px;font-size:20px">0</div><div class="t" style="right:2049.0px;top:1290.9px;font-size:20px">3</div><div class="t" style="right:1931.3px;top:1290.9px;font-size:20px">0</div><div class="t" style="right:1814.3px;top:1290.9px;font-size:20px">0</div><div class="t" style="right:1696.5px;top:1290.9px;font-size:20px">0</div><div class="t" style="right:1579.2px;top:1290.9px;font-size:20px">0</div><div class="t" style="right:1461.7px;top:1290.9px;font-size:20px">0</div><div class="t" style="right:1344.2px;top:1290.9px;font-size:20px">0</div><div class="t" style="right:1226.9px;top:1290.9px;font-size:20px">0</div><div class="t" style="right:1108.8px;top:1290.9px;font-size:20px">0</div><div class="t" style="right:991.4px;top:1290.9px;font-size:20px">0</div><div class="t" style="right:874.0px;top:1290.9px;font-size:20px">0</div>
<div style="position:absolute;left:0px;top:1325px;width:2147px;height:29px;background:#f0f0f0"></div>
<div class="t" style="left:3px;top:1328.9px;font-size:20px;color:#000;font-weight:normal;">Ready</div>
<div style="position:absolute;left:1747px;top:1327px;width:1px;height:25px;background:#dcdcdc"></div>
<div style="position:absolute;left:1761px;top:1327px;width:1px;height:25px;background:#dcdcdc"></div>
<div style="position:absolute;left:1890px;top:1327px;width:1px;height:25px;background:#dcdcdc"></div>
<div style="position:absolute;left:1964px;top:1327px;width:1px;height:25px;background:#dcdcdc"></div>
<div style="position:absolute;left:2020px;top:1327px;width:1px;height:25px;background:#dcdcdc"></div>
<div style="position:absolute;left:2085px;top:1327px;width:1px;height:25px;background:#dcdcdc"></div>
<div class="t" style="left:1766px;top:1328.9px;font-size:20px;color:#000;font-weight:normal;">Programmer</div>
<div class="t" style="left:1896px;top:1328.9px;font-size:20px;color:#000;font-weight:normal;">Offline</div>
<div class="t" style="left:1973px;top:1328.9px;font-size:20px;color:#808080;font-weight:normal;">CAP</div>
<div class="t" style="left:2028px;top:1328.9px;font-size:20px;color:#000;font-weight:normal;">NUM</div>
<div class="t" style="left:2091px;top:1328.9px;font-size:20px;color:#808080;font-weight:normal;">SCRL</div>
</body></html>
